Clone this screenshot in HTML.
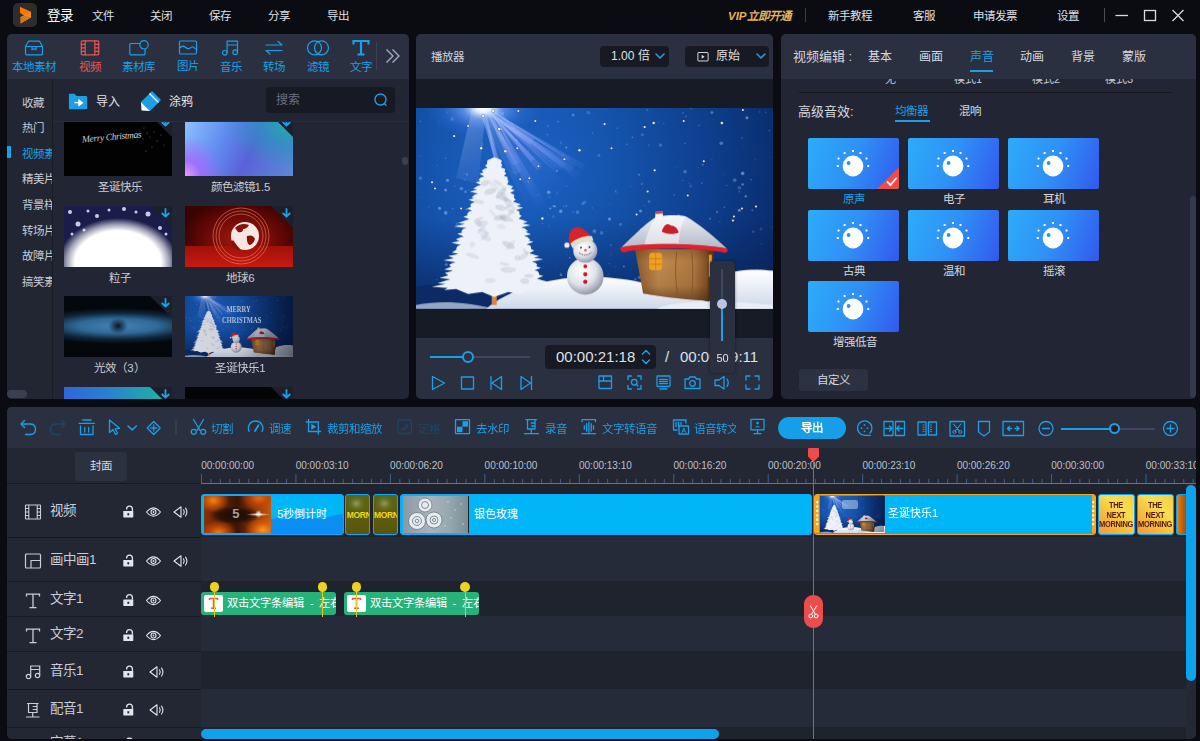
<!DOCTYPE html>
<html lang="zh-CN">
<head>
<meta charset="utf-8">
<title>视频编辑器</title>
<style>
*{box-sizing:border-box;margin:0;padding:0}
html,body{width:1200px;height:741px;overflow:hidden;background:#0b0c11}
body{font-family:"Liberation Sans",sans-serif;font-size:12px;color:#d5d8df;position:relative}
.abs,.abs>*{position:absolute}
#app{position:absolute;left:0;top:0;width:1200px;height:741px;overflow:hidden}
#app div,#app span,#app svg{position:absolute}
.t{white-space:nowrap;line-height:16px}
.blue{color:#1a9fe8}
svg{overflow:visible}
/* panels */
#left{left:7px;top:34px;width:402px;height:365px;background:#222634;border-radius:5px;overflow:hidden}
#player{left:416px;top:34px;width:357px;height:365px;background:#171b25;border-radius:5px;overflow:hidden}
#right{left:781px;top:34px;width:415px;height:365px;background:#222634;border-radius:5px;overflow:hidden}
#tl{left:7px;top:407px;width:1189px;height:332px;background:#242936;border-radius:5px;overflow:hidden}
.hd{left:0;top:0;width:100%;height:45px;background:#2a3040}
</style>
</head>
<body>
<div id="app">
<svg width="0" height="0" style="left:0;top:0">
<defs>
<radialGradient id="xbg" gradientUnits="userSpaceOnUse" cx="105" cy="55" r="300"><stop offset="0" stop-color="#1c62c4"/><stop offset="0.3" stop-color="#1555ae"/><stop offset="0.62" stop-color="#0e3f8e"/><stop offset="1" stop-color="#08245c"/></radialGradient>
<linearGradient id="xdk" x1="0" y1="0" x2="0" y2="1"><stop offset="0" stop-color="#061a48" stop-opacity="0"/><stop offset="0.55" stop-color="#061a48" stop-opacity="0"/><stop offset="1" stop-color="#061a48" stop-opacity="0.55"/></linearGradient>
<radialGradient id="xglow" cx="0.5" cy="0.5" r="0.5"><stop offset="0" stop-color="#ffffff"/><stop offset="0.12" stop-color="#e6f0ff" stop-opacity="0.98"/><stop offset="0.35" stop-color="#7eaaff" stop-opacity="0.6"/><stop offset="0.7" stop-color="#4a80f0" stop-opacity="0.2"/><stop offset="1" stop-color="#2a78e0" stop-opacity="0"/></radialGradient>
<linearGradient id="xray" gradientUnits="userSpaceOnUse" x1="67" y1="0" x2="125" y2="100"><stop offset="0" stop-color="#e6eeff" stop-opacity="0.95"/><stop offset="0.4" stop-color="#94a6ff" stop-opacity="0.5"/><stop offset="1" stop-color="#5a90ff" stop-opacity="0"/></linearGradient>
<linearGradient id="xwall" x1="0" y1="0" x2="1" y2="0"><stop offset="0" stop-color="#8c5a2c"/><stop offset="0.3" stop-color="#c08a50"/><stop offset="0.75" stop-color="#b07840"/><stop offset="1" stop-color="#6a3c1a"/></linearGradient>
<linearGradient id="xwsh" x1="0" y1="0" x2="0" y2="1"><stop offset="0" stop-color="#3a2008" stop-opacity="0.250"/><stop offset="0.250" stop-color="#3a2008" stop-opacity="0"/><stop offset="0.700" stop-color="#3a2008" stop-opacity="0.100"/><stop offset="1" stop-color="#3a2008" stop-opacity="0.550"/></linearGradient>
<linearGradient id="xsnow" x1="0" y1="0" x2="0" y2="1"><stop offset="0" stop-color="#ffffff"/><stop offset="1" stop-color="#cfd8ea"/></linearGradient>
<linearGradient id="xroof" x1="0" y1="0" x2="0" y2="1"><stop offset="0" stop-color="#eceef3"/><stop offset="1" stop-color="#b4b9c8"/></linearGradient>
<radialGradient id="xball" cx="0.4" cy="0.35" r="0.7"><stop offset="0" stop-color="#ffffff"/><stop offset="0.55" stop-color="#dfe3ea"/><stop offset="1" stop-color="#868e9f"/></radialGradient>
<filter id="b1"><feGaussianBlur stdDeviation="0.7"/></filter>
<filter id="b2"><feGaussianBlur stdDeviation="1.6"/></filter>
<symbol id="xmas" viewBox="0 0 356 200" preserveAspectRatio="none">
<rect width="356" height="200" fill="url(#xbg)"/>
<rect width="356" height="200" fill="url(#xdk)"/>
<g filter="url(#b1)"><path d="M69.2 0 L137.5 62.7 L140.9 58.7 Z" fill="url(#xray)" opacity="0.75"/><path d="M65.1 0 L113.9 36.5 L118.3 29.8 Z" fill="url(#xray)" opacity="0.59"/><path d="M67.7 0 L85.5 86.5 L93.2 84.5 Z" fill="url(#xray)" opacity="0.76"/><path d="M68.3 0 L144.2 62.2 L149.2 55.7 Z" fill="url(#xray)" opacity="0.80"/><path d="M69.1 0 L96.9 57.6 L103.5 53.9 Z" fill="url(#xray)" opacity="0.62"/><path d="M70.6 0 L164.6 60.9 L167.7 55.9 Z" fill="url(#xray)" opacity="0.85"/><path d="M71.6 0 L121.8 103.8 L126.6 101.3 Z" fill="url(#xray)" opacity="0.68"/><path d="M63.6 0 L94.8 108.4 L98.2 107.3 Z" fill="url(#xray)" opacity="0.59"/><path d="M65.6 0 L85.5 83.9 L92.0 82.1 Z" fill="url(#xray)" opacity="0.70"/><path d="M69.0 0 L121.1 62.2 L125.9 57.8 Z" fill="url(#xray)" opacity="0.86"/><path d="M73.9 0 L125.8 103.5 L132.9 99.6 Z" fill="url(#xray)" opacity="0.77"/><path d="M72.9 0 L158.7 71.5 L164.1 64.5 Z" fill="url(#xray)" opacity="0.73"/><path d="M68.9 0 L98.5 66.5 L105.6 62.8 Z" fill="url(#xray)" opacity="0.61"/><path d="M63.1 0 L154.0 64.2 L158.9 56.7 Z" fill="url(#xray)" opacity="0.82"/><path d="M71.2 0 L114.8 53.6 L118.4 50.4 Z" fill="url(#xray)" opacity="0.85"/><path d="M70.6 0 L151.9 52.8 L153.6 50.0 Z" fill="url(#xray)" opacity="0.63"/><path d="M56 0 L70 0 L62 75 L40 70 Z" fill="url(#xray)" opacity="0.3"/><path d="M60 0 L80 0 L190 118 L125 128 Z" fill="url(#xray)" opacity="0.35"/></g>
<ellipse cx="67" cy="1" rx="58" ry="30" fill="url(#xglow)"/>
<g filter="url(#b1)"><circle cx="161.0" cy="103.6" r="1.8" fill="#bcd6ff" opacity="0.31"/><circle cx="304.4" cy="35.1" r="1.8" fill="#bcd6ff" opacity="0.37"/><circle cx="282.3" cy="17.4" r="1.0" fill="#bcd6ff" opacity="0.20"/><circle cx="191.8" cy="164.7" r="0.5" fill="#bcd6ff" opacity="0.36"/><circle cx="141.0" cy="83.8" r="0.7" fill="#bcd6ff" opacity="0.37"/><circle cx="296.1" cy="11.7" r="0.5" fill="#bcd6ff" opacity="0.22"/><circle cx="86.1" cy="5.6" r="1.8" fill="#bcd6ff" opacity="0.26"/><circle cx="210.4" cy="36.1" r="0.8" fill="#bcd6ff" opacity="0.37"/><circle cx="177.9" cy="122.6" r="1.8" fill="#bcd6ff" opacity="0.38"/><circle cx="144.8" cy="102.0" r="0.6" fill="#bcd6ff" opacity="0.40"/><circle cx="112.2" cy="42.5" r="1.0" fill="#bcd6ff" opacity="0.16"/><circle cx="200.5" cy="20.0" r="0.6" fill="#bcd6ff" opacity="0.45"/><circle cx="137.6" cy="177.2" r="0.5" fill="#bcd6ff" opacity="0.22"/><circle cx="330.0" cy="9.7" r="1.5" fill="#bcd6ff" opacity="0.49"/><circle cx="141.5" cy="13.5" r="0.8" fill="#bcd6ff" opacity="0.42"/><circle cx="96.0" cy="16.1" r="1.2" fill="#bcd6ff" opacity="0.16"/><circle cx="146.0" cy="170.7" r="0.7" fill="#bcd6ff" opacity="0.24"/><circle cx="36.0" cy="11.1" r="1.8" fill="#bcd6ff" opacity="0.21"/><circle cx="199.1" cy="82.8" r="0.8" fill="#bcd6ff" opacity="0.49"/><circle cx="273.9" cy="77.6" r="1.5" fill="#bcd6ff" opacity="0.19"/><circle cx="149.8" cy="39.4" r="1.0" fill="#bcd6ff" opacity="0.45"/><circle cx="347.0" cy="109.7" r="0.5" fill="#bcd6ff" opacity="0.22"/><circle cx="140.4" cy="158.1" r="0.6" fill="#bcd6ff" opacity="0.16"/><circle cx="52.1" cy="81.7" r="0.5" fill="#bcd6ff" opacity="0.42"/><circle cx="117.1" cy="54.8" r="0.6" fill="#bcd6ff" opacity="0.18"/><circle cx="74.3" cy="117.8" r="0.5" fill="#bcd6ff" opacity="0.36"/><circle cx="132.3" cy="83.8" r="1.8" fill="#bcd6ff" opacity="0.44"/><circle cx="48.3" cy="71.4" r="0.7" fill="#bcd6ff" opacity="0.26"/><circle cx="81.3" cy="112.9" r="0.8" fill="#bcd6ff" opacity="0.21"/><circle cx="223.9" cy="102.5" r="1.5" fill="#bcd6ff" opacity="0.46"/><circle cx="214.9" cy="78.0" r="0.6" fill="#bcd6ff" opacity="0.19"/><circle cx="182.4" cy="47.2" r="1.5" fill="#bcd6ff" opacity="0.24"/><circle cx="293.2" cy="110.3" r="1.0" fill="#bcd6ff" opacity="0.33"/><circle cx="330.8" cy="180.8" r="0.7" fill="#bcd6ff" opacity="0.23"/><circle cx="199.1" cy="157.7" r="0.6" fill="#bcd6ff" opacity="0.25"/><circle cx="326.6" cy="37.7" r="0.5" fill="#bcd6ff" opacity="0.17"/><circle cx="146.5" cy="46.1" r="0.5" fill="#bcd6ff" opacity="0.21"/><circle cx="131.3" cy="105.9" r="0.7" fill="#bcd6ff" opacity="0.18"/><circle cx="49.3" cy="83.3" r="1.2" fill="#bcd6ff" opacity="0.38"/><circle cx="246.1" cy="108.1" r="0.7" fill="#bcd6ff" opacity="0.36"/><circle cx="328.8" cy="87.8" r="1.2" fill="#bcd6ff" opacity="0.40"/><circle cx="342.7" cy="3.9" r="0.6" fill="#bcd6ff" opacity="0.32"/><circle cx="260.1" cy="59.0" r="0.6" fill="#bcd6ff" opacity="0.18"/><circle cx="194.4" cy="136.3" r="0.7" fill="#bcd6ff" opacity="0.43"/><circle cx="325.7" cy="65.1" r="1.8" fill="#bcd6ff" opacity="0.47"/><circle cx="310.1" cy="77.2" r="0.5" fill="#bcd6ff" opacity="0.45"/><circle cx="203.9" cy="115.6" r="1.5" fill="#bcd6ff" opacity="0.28"/><circle cx="4.4" cy="13.4" r="0.6" fill="#bcd6ff" opacity="0.37"/><circle cx="353.6" cy="162.8" r="1.2" fill="#bcd6ff" opacity="0.29"/><circle cx="261.7" cy="107.5" r="1.8" fill="#bcd6ff" opacity="0.31"/><circle cx="192.7" cy="96.0" r="0.5" fill="#bcd6ff" opacity="0.26"/><circle cx="31.2" cy="4.1" r="0.6" fill="#bcd6ff" opacity="0.32"/><circle cx="218.8" cy="170.3" r="1.0" fill="#bcd6ff" opacity="0.46"/><circle cx="131.0" cy="26.5" r="0.8" fill="#bcd6ff" opacity="0.33"/><circle cx="268.3" cy="63.4" r="1.8" fill="#bcd6ff" opacity="0.32"/><circle cx="86.0" cy="74.9" r="1.0" fill="#bcd6ff" opacity="0.22"/><circle cx="153.4" cy="149.1" r="0.8" fill="#bcd6ff" opacity="0.46"/><circle cx="136.9" cy="107.9" r="1.2" fill="#bcd6ff" opacity="0.22"/><circle cx="47.9" cy="64.9" r="0.5" fill="#bcd6ff" opacity="0.40"/><circle cx="338.2" cy="51.2" r="0.7" fill="#bcd6ff" opacity="0.19"/><circle cx="167.8" cy="171.3" r="1.5" fill="#bcd6ff" opacity="0.28"/><circle cx="185.1" cy="124.3" r="1.8" fill="#bcd6ff" opacity="0.26"/><circle cx="295.0" cy="51.5" r="0.5" fill="#bcd6ff" opacity="0.39"/><circle cx="100.1" cy="65.5" r="0.5" fill="#bcd6ff" opacity="0.37"/><circle cx="144.2" cy="35.1" r="1.0" fill="#bcd6ff" opacity="0.23"/><circle cx="50.2" cy="8.7" r="0.6" fill="#bcd6ff" opacity="0.31"/><circle cx="224.3" cy="121.2" r="1.2" fill="#bcd6ff" opacity="0.49"/><circle cx="243.7" cy="36.9" r="1.8" fill="#bcd6ff" opacity="0.24"/><circle cx="254.3" cy="139.7" r="0.5" fill="#bcd6ff" opacity="0.21"/><circle cx="97.0" cy="64.0" r="0.7" fill="#bcd6ff" opacity="0.29"/><circle cx="281.9" cy="167.7" r="0.6" fill="#bcd6ff" opacity="0.29"/><circle cx="317.8" cy="71.8" r="1.8" fill="#bcd6ff" opacity="0.31"/><circle cx="222.7" cy="168.3" r="1.5" fill="#bcd6ff" opacity="0.34"/><circle cx="232.4" cy="93.0" r="1.2" fill="#bcd6ff" opacity="0.31"/><circle cx="231.9" cy="37.9" r="0.6" fill="#bcd6ff" opacity="0.22"/><circle cx="320.4" cy="181.4" r="1.0" fill="#bcd6ff" opacity="0.34"/><circle cx="281.5" cy="59.3" r="0.5" fill="#bcd6ff" opacity="0.27"/><circle cx="29.5" cy="81.6" r="1.5" fill="#bcd6ff" opacity="0.42"/><circle cx="173.5" cy="5.3" r="0.6" fill="#bcd6ff" opacity="0.30"/><circle cx="12.5" cy="98.6" r="0.7" fill="#bcd6ff" opacity="0.31"/><circle cx="355.9" cy="166.6" r="1.8" fill="#bcd6ff" opacity="0.48"/><circle cx="175.4" cy="175.6" r="0.6" fill="#bcd6ff" opacity="0.42"/><circle cx="156.4" cy="103.4" r="0.7" fill="#bcd6ff" opacity="0.33"/><circle cx="300.3" cy="103.6" r="1.0" fill="#bcd6ff" opacity="0.38"/><circle cx="339.9" cy="161.0" r="0.8" fill="#bcd6ff" opacity="0.26"/><circle cx="50.2" cy="100.8" r="1.0" fill="#bcd6ff" opacity="0.35"/><circle cx="71.5" cy="99.1" r="0.5" fill="#bcd6ff" opacity="0.36"/><circle cx="9.9" cy="179.3" r="1.5" fill="#bcd6ff" opacity="0.34"/><circle cx="352.2" cy="22.6" r="0.6" fill="#bcd6ff" opacity="0.39"/><circle cx="23.5" cy="99.7" r="1.5" fill="#bcd6ff" opacity="0.47"/><circle cx="284.9" cy="74.8" r="0.8" fill="#bcd6ff" opacity="0.32"/><circle cx="45.2" cy="80.2" r="1.8" fill="#bcd6ff" opacity="0.33"/><circle cx="38.7" cy="77.6" r="0.5" fill="#bcd6ff" opacity="0.47"/><circle cx="46.1" cy="144.2" r="0.5" fill="#bcd6ff" opacity="0.16"/><circle cx="55.4" cy="2.2" r="1.0" fill="#bcd6ff" opacity="0.26"/><circle cx="126.5" cy="114.7" r="0.6" fill="#bcd6ff" opacity="0.32"/><circle cx="207.3" cy="157.6" r="1.0" fill="#bcd6ff" opacity="0.40"/><circle cx="249.7" cy="162.6" r="0.5" fill="#bcd6ff" opacity="0.28"/><circle cx="147.2" cy="97.9" r="0.7" fill="#bcd6ff" opacity="0.34"/><circle cx="307.5" cy="98.8" r="0.8" fill="#bcd6ff" opacity="0.34"/><circle cx="303.0" cy="113.2" r="0.7" fill="#bcd6ff" opacity="0.23"/><circle cx="263.7" cy="149.9" r="0.7" fill="#bcd6ff" opacity="0.26"/><circle cx="112.1" cy="170.7" r="0.8" fill="#bcd6ff" opacity="0.42"/><circle cx="69.3" cy="17.9" r="0.8" fill="#bcd6ff" opacity="0.20"/><circle cx="31.4" cy="71.8" r="1.5" fill="#bcd6ff" opacity="0.44"/><circle cx="150.1" cy="146.1" r="0.7" fill="#bcd6ff" opacity="0.22"/><circle cx="223.6" cy="147.8" r="0.6" fill="#bcd6ff" opacity="0.22"/><circle cx="242.9" cy="168.6" r="1.2" fill="#bcd6ff" opacity="0.19"/><circle cx="180.0" cy="140.3" r="0.8" fill="#bcd6ff" opacity="0.43"/><circle cx="171.6" cy="4.5" r="1.8" fill="#bcd6ff" opacity="0.20"/><circle cx="65.7" cy="37.7" r="0.7" fill="#bcd6ff" opacity="0.50"/><circle cx="330.0" cy="17.6" r="0.5" fill="#bcd6ff" opacity="0.20"/><circle cx="242.4" cy="14.4" r="0.6" fill="#bcd6ff" opacity="0.26"/><circle cx="166.2" cy="95.3" r="1.5" fill="#bcd6ff" opacity="0.22"/><circle cx="132.8" cy="117.3" r="0.5" fill="#bcd6ff" opacity="0.45"/><circle cx="64.5" cy="84.0" r="1.2" fill="#bcd6ff" opacity="0.29"/><circle cx="69.5" cy="30.5" r="0.5" fill="#bcd6ff" opacity="0.26"/><circle cx="30.2" cy="155.8" r="1.5" fill="#bcd6ff" opacity="0.35"/><circle cx="68.0" cy="108.2" r="1.2" fill="#bcd6ff" opacity="0.43"/><circle cx="91.9" cy="168.6" r="0.7" fill="#bcd6ff" opacity="0.44"/><circle cx="144.4" cy="165.9" r="1.2" fill="#bcd6ff" opacity="0.42"/><circle cx="272.4" cy="75.1" r="0.7" fill="#bcd6ff" opacity="0.17"/><circle cx="121.7" cy="86.7" r="0.5" fill="#bcd6ff" opacity="0.46"/><circle cx="352.6" cy="167.0" r="0.5" fill="#bcd6ff" opacity="0.23"/><circle cx="336.3" cy="123.2" r="1.2" fill="#bcd6ff" opacity="0.23"/><circle cx="144.6" cy="33.7" r="0.6" fill="#bcd6ff" opacity="0.29"/><circle cx="356.0" cy="118.8" r="0.6" fill="#bcd6ff" opacity="0.42"/><circle cx="348.9" cy="4.2" r="0.6" fill="#bcd6ff" opacity="0.41"/><circle cx="91.4" cy="74.3" r="0.5" fill="#bcd6ff" opacity="0.42"/><circle cx="230.7" cy="2.0" r="1.0" fill="#bcd6ff" opacity="0.24"/><circle cx="322.4" cy="101.8" r="1.5" fill="#bcd6ff" opacity="0.49"/><circle cx="202.2" cy="184.1" r="1.8" fill="#bcd6ff" opacity="0.43"/><circle cx="27.1" cy="110.5" r="0.5" fill="#bcd6ff" opacity="0.29"/><circle cx="334.1" cy="71.4" r="0.7" fill="#bcd6ff" opacity="0.45"/><circle cx="192.9" cy="110.4" r="1.5" fill="#bcd6ff" opacity="0.48"/><circle cx="149.8" cy="97.5" r="1.0" fill="#bcd6ff" opacity="0.28"/><circle cx="101.7" cy="121.2" r="1.0" fill="#bcd6ff" opacity="0.38"/><circle cx="266.2" cy="5.0" r="0.8" fill="#bcd6ff" opacity="0.36"/><circle cx="225.3" cy="75.6" r="1.5" fill="#bcd6ff" opacity="0.17"/><circle cx="112.2" cy="73.6" r="1.2" fill="#bcd6ff" opacity="0.18"/><circle cx="322.4" cy="79.5" r="1.8" fill="#bcd6ff" opacity="0.24"/><circle cx="269.0" cy="8.4" r="0.6" fill="#bcd6ff" opacity="0.48"/><circle cx="257.3" cy="86.6" r="0.8" fill="#bcd6ff" opacity="0.36"/><circle cx="41.0" cy="115.5" r="1.8" fill="#bcd6ff" opacity="0.19"/><circle cx="306.6" cy="66.0" r="0.7" fill="#bcd6ff" opacity="0.19"/><circle cx="157.7" cy="123.6" r="1.8" fill="#bcd6ff" opacity="0.36"/><circle cx="227.7" cy="126.2" r="1.2" fill="#bcd6ff" opacity="0.42"/><circle cx="189.0" cy="184.6" r="1.0" fill="#bcd6ff" opacity="0.41"/><circle cx="84.9" cy="21.1" r="1.0" fill="#bcd6ff" opacity="0.42"/><circle cx="222.5" cy="66.4" r="1.0" fill="#bcd6ff" opacity="0.36"/><circle cx="258.1" cy="129.3" r="0.8" fill="#bcd6ff" opacity="0.37"/><circle cx="268.2" cy="35.1" r="0.8" fill="#bcd6ff" opacity="0.33"/><circle cx="232.4" cy="36.3" r="0.5" fill="#bcd6ff" opacity="0.37"/><circle cx="3.4" cy="48.0" r="0.5" fill="#bcd6ff" opacity="0.37"/><circle cx="36.5" cy="100.2" r="0.6" fill="#bcd6ff" opacity="0.41"/><circle cx="325.0" cy="29.8" r="0.8" fill="#bcd6ff" opacity="0.37"/><circle cx="132.9" cy="88.5" r="0.8" fill="#bcd6ff" opacity="0.27"/><circle cx="176.0" cy="24.7" r="0.6" fill="#bcd6ff" opacity="0.43"/><circle cx="159.2" cy="152.1" r="0.8" fill="#bcd6ff" opacity="0.31"/><circle cx="266.0" cy="72.2" r="0.7" fill="#bcd6ff" opacity="0.28"/><circle cx="232.7" cy="183.0" r="1.2" fill="#bcd6ff" opacity="0.25"/><circle cx="270.2" cy="152.8" r="0.7" fill="#bcd6ff" opacity="0.30"/><circle cx="131.5" cy="17.9" r="1.2" fill="#bcd6ff" opacity="0.18"/><circle cx="29.6" cy="104.4" r="1.8" fill="#bcd6ff" opacity="0.44"/><circle cx="165.0" cy="152.3" r="0.5" fill="#bcd6ff" opacity="0.18"/><circle cx="75.9" cy="122.5" r="0.6" fill="#bcd6ff" opacity="0.39"/><circle cx="176.1" cy="141.4" r="1.2" fill="#bcd6ff" opacity="0.25"/><circle cx="50.9" cy="66.2" r="1.2" fill="#bcd6ff" opacity="0.28"/><circle cx="41.8" cy="131.2" r="1.0" fill="#bcd6ff" opacity="0.30"/><circle cx="285.9" cy="56.4" r="1.2" fill="#bcd6ff" opacity="0.23"/><circle cx="344.5" cy="135.0" r="0.8" fill="#bcd6ff" opacity="0.18"/><circle cx="295.0" cy="4.5" r="1.5" fill="#bcd6ff" opacity="0.35"/><circle cx="283.4" cy="136.7" r="1.2" fill="#bcd6ff" opacity="0.43"/><circle cx="192.4" cy="154.7" r="0.7" fill="#bcd6ff" opacity="0.21"/><circle cx="270.2" cy="163.0" r="1.0" fill="#bcd6ff" opacity="0.43"/><circle cx="78.8" cy="10.7" r="0.7" fill="#bcd6ff" opacity="0.35"/><circle cx="344.0" cy="120.5" r="1.5" fill="#bcd6ff" opacity="0.17"/><circle cx="194.7" cy="145.8" r="0.6" fill="#bcd6ff" opacity="0.27"/><circle cx="97.4" cy="19.5" r="1.2" fill="#bcd6ff" opacity="0.18"/><circle cx="225.7" cy="26.6" r="1.5" fill="#bcd6ff" opacity="0.24"/><circle cx="78.5" cy="141.6" r="1.2" fill="#bcd6ff" opacity="0.42"/><circle cx="140.4" cy="62.5" r="1.2" fill="#bcd6ff" opacity="0.39"/><circle cx="175.7" cy="99.4" r="0.6" fill="#bcd6ff" opacity="0.40"/><circle cx="325.7" cy="76.0" r="1.2" fill="#bcd6ff" opacity="0.45"/><circle cx="286.9" cy="154.3" r="1.8" fill="#bcd6ff" opacity="0.49"/><circle cx="227.9" cy="96.9" r="0.5" fill="#bcd6ff" opacity="0.43"/><circle cx="150.1" cy="77.8" r="0.7" fill="#bcd6ff" opacity="0.24"/><circle cx="57.8" cy="117.5" r="0.7" fill="#bcd6ff" opacity="0.26"/><circle cx="138.6" cy="97.9" r="1.0" fill="#bcd6ff" opacity="0.49"/><circle cx="21.1" cy="57.1" r="0.6" fill="#bcd6ff" opacity="0.26"/><circle cx="55.4" cy="170.2" r="0.5" fill="#bcd6ff" opacity="0.41"/><circle cx="6.1" cy="89.0" r="0.5" fill="#bcd6ff" opacity="0.26"/><circle cx="70.4" cy="66.5" r="0.8" fill="#bcd6ff" opacity="0.36"/><circle cx="168.0" cy="94.1" r="1.8" fill="#bcd6ff" opacity="0.21"/><circle cx="100.1" cy="31.9" r="1.0" fill="#bcd6ff" opacity="0.37"/><circle cx="335.4" cy="101.8" r="1.0" fill="#bcd6ff" opacity="0.32"/><circle cx="143.3" cy="176.8" r="0.6" fill="#bcd6ff" opacity="0.32"/><circle cx="78.7" cy="9.2" r="0.7" fill="#bcd6ff" opacity="0.43"/><circle cx="137.1" cy="97.6" r="1.0" fill="#bcd6ff" opacity="0.43"/><circle cx="20.6" cy="171.0" r="0.5" fill="#bcd6ff" opacity="0.46"/><circle cx="322.3" cy="83.3" r="0.8" fill="#bcd6ff" opacity="0.40"/><circle cx="215.8" cy="29.1" r="0.7" fill="#bcd6ff" opacity="0.42"/><circle cx="51.5" cy="168.0" r="0.7" fill="#bcd6ff" opacity="0.37"/><circle cx="353.6" cy="49.3" r="0.5" fill="#bcd6ff" opacity="0.20"/><circle cx="274.3" cy="0.3" r="0.7" fill="#bcd6ff" opacity="0.44"/><circle cx="29.3" cy="49.9" r="0.6" fill="#bcd6ff" opacity="0.46"/><circle cx="247.0" cy="15.3" r="1.0" fill="#bcd6ff" opacity="0.16"/><circle cx="66.8" cy="35.7" r="0.6" fill="#bcd6ff" opacity="0.42"/><circle cx="156.7" cy="6.9" r="1.5" fill="#bcd6ff" opacity="0.33"/><circle cx="56.1" cy="153.9" r="1.0" fill="#bcd6ff" opacity="0.26"/><circle cx="144.3" cy="102.9" r="1.8" fill="#bcd6ff" opacity="0.38"/><circle cx="23.9" cy="13.8" r="0.7" fill="#bcd6ff" opacity="0.19"/><circle cx="140.3" cy="85.4" r="0.6" fill="#bcd6ff" opacity="0.38"/><circle cx="4.4" cy="69.8" r="1.8" fill="#bcd6ff" opacity="0.23"/><circle cx="200.8" cy="84.7" r="0.5" fill="#bcd6ff" opacity="0.45"/><circle cx="300.6" cy="133.1" r="0.7" fill="#bcd6ff" opacity="0.25"/><circle cx="133.9" cy="99.9" r="1.0" fill="#bcd6ff" opacity="0.48"/><circle cx="268.8" cy="102.8" r="0.6" fill="#bcd6ff" opacity="0.24"/><circle cx="71.2" cy="135.3" r="1.2" fill="#bcd6ff" opacity="0.26"/><circle cx="97.5" cy="86.9" r="1.2" fill="#bcd6ff" opacity="0.31"/></g>
<circle cx="77" cy="3" r="1.8" fill="#3a3a50" opacity="0.55"/><circle cx="77" cy="3" r="1.3" fill="#f6f0dc"/><circle cx="67" cy="8" r="1.7" fill="#3a3a50" opacity="0.55"/><circle cx="67" cy="8" r="1.2" fill="#f6f0dc"/><circle cx="52" cy="18" r="1.5" fill="#3a3a50" opacity="0.55"/><circle cx="52" cy="18" r="1.0" fill="#f6f0dc"/><circle cx="38" cy="28" r="1.6" fill="#3a3a50" opacity="0.55"/><circle cx="38" cy="28" r="1.1" fill="#f6f0dc"/><circle cx="83" cy="21" r="1.8" fill="#3a3a50" opacity="0.55"/><circle cx="83" cy="21" r="1.3" fill="#f6f0dc"/><circle cx="102" cy="3" r="1.5" fill="#3a3a50" opacity="0.55"/><circle cx="102" cy="3" r="1.0" fill="#f6f0dc"/><circle cx="119" cy="13" r="1.5" fill="#3a3a50" opacity="0.55"/><circle cx="119" cy="13" r="1.0" fill="#f6f0dc"/><circle cx="65" cy="40" r="1.7" fill="#3a3a50" opacity="0.55"/><circle cx="65" cy="40" r="1.2" fill="#f6f0dc"/><circle cx="89" cy="43" r="1.8" fill="#3a3a50" opacity="0.55"/><circle cx="89" cy="43" r="1.3" fill="#f6f0dc"/><circle cx="101" cy="40" r="1.5" fill="#3a3a50" opacity="0.55"/><circle cx="101" cy="40" r="1.0" fill="#f6f0dc"/><circle cx="188" cy="16" r="1.6" fill="#3a3a50" opacity="0.55"/><circle cx="188" cy="16" r="1.1" fill="#f6f0dc"/><circle cx="228" cy="19" r="1.6" fill="#3a3a50" opacity="0.55"/><circle cx="228" cy="19" r="1.1" fill="#f6f0dc"/><circle cx="237" cy="15" r="1.7" fill="#3a3a50" opacity="0.55"/><circle cx="237" cy="15" r="1.2" fill="#f6f0dc"/><circle cx="267" cy="13" r="1.5" fill="#3a3a50" opacity="0.55"/><circle cx="267" cy="13" r="1.0" fill="#f6f0dc"/><circle cx="305" cy="15" r="1.7" fill="#3a3a50" opacity="0.55"/><circle cx="305" cy="15" r="1.2" fill="#f6f0dc"/><circle cx="326" cy="2" r="1.5" fill="#3a3a50" opacity="0.55"/><circle cx="326" cy="2" r="1.0" fill="#f6f0dc"/><circle cx="163" cy="42" r="1.7" fill="#3a3a50" opacity="0.55"/><circle cx="163" cy="42" r="1.2" fill="#f6f0dc"/><circle cx="195" cy="40" r="1.5" fill="#3a3a50" opacity="0.55"/><circle cx="195" cy="40" r="1.0" fill="#f6f0dc"/><circle cx="148" cy="51" r="1.6" fill="#3a3a50" opacity="0.55"/><circle cx="148" cy="51" r="1.1" fill="#f6f0dc"/><circle cx="122" cy="58" r="1.5" fill="#3a3a50" opacity="0.55"/><circle cx="122" cy="58" r="1.0" fill="#f6f0dc"/><circle cx="104" cy="71" r="1.5" fill="#3a3a50" opacity="0.55"/><circle cx="104" cy="71" r="1.0" fill="#f6f0dc"/><circle cx="113" cy="70" r="1.5" fill="#3a3a50" opacity="0.55"/><circle cx="113" cy="70" r="1.0" fill="#f6f0dc"/><circle cx="16" cy="74" r="1.5" fill="#3a3a50" opacity="0.55"/><circle cx="16" cy="74" r="1.0" fill="#f6f0dc"/><circle cx="19" cy="80" r="1.5" fill="#3a3a50" opacity="0.55"/><circle cx="19" cy="80" r="1.0" fill="#f6f0dc"/><circle cx="287" cy="53" r="1.5" fill="#3a3a50" opacity="0.55"/><circle cx="287" cy="53" r="1.0" fill="#f6f0dc"/><circle cx="238" cy="62" r="1.6" fill="#3a3a50" opacity="0.55"/><circle cx="238" cy="62" r="1.1" fill="#f6f0dc"/><circle cx="231" cy="83" r="1.5" fill="#3a3a50" opacity="0.55"/><circle cx="231" cy="83" r="1.0" fill="#f6f0dc"/><circle cx="271" cy="87" r="1.5" fill="#3a3a50" opacity="0.55"/><circle cx="271" cy="87" r="1.0" fill="#f6f0dc"/><circle cx="220" cy="106" r="1.5" fill="#3a3a50" opacity="0.55"/><circle cx="220" cy="106" r="1.0" fill="#f6f0dc"/><circle cx="325" cy="100" r="1.5" fill="#3a3a50" opacity="0.55"/><circle cx="325" cy="100" r="1.0" fill="#f6f0dc"/><circle cx="339" cy="98" r="1.5" fill="#3a3a50" opacity="0.55"/><circle cx="339" cy="98" r="1.0" fill="#f6f0dc"/><circle cx="317" cy="108" r="1.5" fill="#3a3a50" opacity="0.55"/><circle cx="317" cy="108" r="1.0" fill="#f6f0dc"/><circle cx="316" cy="112" r="1.5" fill="#3a3a50" opacity="0.55"/><circle cx="316" cy="112" r="1.0" fill="#f6f0dc"/><circle cx="126" cy="110" r="1.7" fill="#3a3a50" opacity="0.55"/><circle cx="126" cy="110" r="1.2" fill="#f6f0dc"/><circle cx="100" cy="103" r="1.5" fill="#3a3a50" opacity="0.55"/><circle cx="100" cy="103" r="1.0" fill="#f6f0dc"/><circle cx="45" cy="100" r="1.5" fill="#3a3a50" opacity="0.55"/><circle cx="45" cy="100" r="1.0" fill="#f6f0dc"/><circle cx="57" cy="126" r="1.5" fill="#3a3a50" opacity="0.55"/><circle cx="57" cy="126" r="1.0" fill="#f6f0dc"/><circle cx="150" cy="180" r="1.7" fill="#3a3a50" opacity="0.55"/><circle cx="150" cy="180" r="1.2" fill="#f6f0dc"/><circle cx="262" cy="179" r="1.5" fill="#3a3a50" opacity="0.55"/><circle cx="262" cy="179" r="1.0" fill="#f6f0dc"/><circle cx="156" cy="170" r="1.5" fill="#3a3a50" opacity="0.55"/><circle cx="156" cy="170" r="1.0" fill="#f6f0dc"/><circle cx="202" cy="190" r="1.7" fill="#3a3a50" opacity="0.55"/><circle cx="202" cy="190" r="1.2" fill="#f6f0dc"/><circle cx="207" cy="198" r="1.7" fill="#3a3a50" opacity="0.55"/><circle cx="207" cy="198" r="1.2" fill="#f6f0dc"/>
<path d="M0 178 C30 172 60 180 90 188 L90 200 L0 200 Z" fill="#0b2a66"/>
<path d="M0 196 C25 191 50 193 80 200 L0 200 Z" fill="#93a6c6"/>
<path d="M300 168 C320 160 340 160 356 162 L356 200 L290 200 Z" fill="url(#xsnow)"/>
<path d="M70 200 C90 182 130 169 170 168 C210 168 240 176 262 186 C290 190 300 196 300 200 Z" fill="url(#xsnow)"/>
<path d="M240 200 C255 192 300 190 356 196 L356 200 Z" fill="#e8edf6"/>
<rect x="75.500" y="184" width="5" height="12" fill="#d98442"/>
<polygon points="78.0,49.0 71.3,52.0 70.8,54.3 71.1,55.5 68.8,57.5 71.4,59.5 67.8,60.6 65.5,62.6 67.6,64.1 63.1,65.5 68.1,68.1 64.6,69.1 62.2,71.7 64.3,72.6 59.6,74.1 64.9,76.6 61.4,77.6 56.9,80.4 61.1,81.1 53.8,83.4 61.8,85.1 58.4,86.2 55.5,89.1 58.0,89.7 52.3,91.4 58.9,93.7 55.5,94.7 54.1,96.6 54.9,98.2 50.8,100.3 56.0,102.2 52.6,103.2 50.7,106.0 52.0,106.7 47.1,108.2 53.1,110.7 49.7,111.8 42.1,114.3 49.0,115.3 37.9,117.8 50.4,119.3 46.9,120.3 45.1,123.0 46.2,123.8 41.1,125.2 47.6,127.8 44.1,128.8 39.7,130.7 43.3,132.3 35.4,134.1 44.9,136.3 41.4,137.4 40.1,139.8 40.5,140.9 35.8,143.9 42.2,144.9 38.7,145.9 32.2,147.3 37.8,149.4 27.3,151.6 39.6,153.4 36.0,154.4 33.0,156.1 35.0,157.9 28.1,160.8 37.0,161.9 33.3,163.0 28.7,164.1 32.3,166.5 23.5,169.1 34.4,170.5 30.7,171.5 21.4,174.3 29.6,175.0 15.6,177.9 31.8,179.0 28.0,181.0 40.0,180.0 52.0,185.0 66.0,183.0 78.0,188.0 92.0,183.0 104.0,185.0 116.0,179.0 127.0,177.0 123.1,178.5 136.0,177.0 125.3,174.5 131.4,172.8 124.2,171.0 120.6,170.0 126.9,167.2 122.7,166.0 122.9,165.0 121.6,162.5 118.1,161.4 124.6,159.1 120.0,157.4 120.9,155.6 119.0,153.9 115.5,152.9 126.9,150.6 117.3,148.9 123.0,147.5 116.4,145.4 112.9,144.4 118.0,141.8 114.6,140.4 114.8,138.9 113.8,136.9 110.3,135.8 117.1,133.1 111.9,131.8 114.0,131.3 111.1,128.3 107.7,127.3 114.7,125.6 109.1,123.3 111.8,122.6 108.4,119.8 105.0,118.8 114.2,116.7 106.3,114.8 111.3,113.4 105.6,111.3 102.3,110.2 105.4,107.2 103.4,106.2 103.2,105.3 102.9,102.7 99.5,101.7 107.0,99.2 100.5,97.7 104.7,95.9 100.0,94.2 96.7,93.2 99.5,91.3 97.6,89.2 97.8,87.0 97.1,85.7 93.8,84.6 98.6,81.8 94.6,80.6 96.9,78.2 94.2,77.1 90.8,76.1 92.6,72.7 91.4,72.1 91.4,70.1 91.1,68.6 87.7,67.6 90.1,64.8 88.2,63.6 89.1,61.1 87.9,60.1 84.4,59.0 86.2,57.1 84.7,55.0 85.6,53.0 84.6,51.5" fill="#eef1f7"/>
<g filter="url(#b1)"><ellipse cx="92.3" cy="136.3" rx="7.0" ry="2.9" transform="rotate(24 92.3 136.3)" fill="#a8b2c6" opacity="0.36"/><ellipse cx="77.2" cy="76.9" rx="7.7" ry="2.4" transform="rotate(40 77.2 76.9)" fill="#a8b2c6" opacity="0.20"/><ellipse cx="65.5" cy="120.9" rx="5.7" ry="2.2" transform="rotate(-49 65.5 120.9)" fill="#a8b2c6" opacity="0.22"/><ellipse cx="93.6" cy="101.9" rx="6.8" ry="1.5" transform="rotate(30 93.6 101.9)" fill="#a8b2c6" opacity="0.21"/><ellipse cx="56.1" cy="135.7" rx="3.0" ry="2.8" transform="rotate(-29 56.1 135.7)" fill="#a8b2c6" opacity="0.22"/><ellipse cx="108.3" cy="172.2" rx="4.4" ry="2.9" transform="rotate(4 108.3 172.2)" fill="#a8b2c6" opacity="0.32"/><ellipse cx="92.5" cy="94.5" rx="6.5" ry="2.9" transform="rotate(39 92.5 94.5)" fill="#a8b2c6" opacity="0.24"/><ellipse cx="63.8" cy="110.1" rx="3.7" ry="1.3" transform="rotate(-20 63.8 110.1)" fill="#a8b2c6" opacity="0.30"/><ellipse cx="81.6" cy="74.3" rx="4.7" ry="1.8" transform="rotate(32 81.6 74.3)" fill="#a8b2c6" opacity="0.28"/><ellipse cx="77.3" cy="105.6" rx="6.5" ry="1.3" transform="rotate(48 77.3 105.6)" fill="#a8b2c6" opacity="0.18"/><ellipse cx="101.1" cy="149.0" rx="3.1" ry="2.6" transform="rotate(-13 101.1 149.0)" fill="#a8b2c6" opacity="0.30"/><ellipse cx="68.6" cy="74.9" rx="3.9" ry="2.9" transform="rotate(-30 68.6 74.9)" fill="#a8b2c6" opacity="0.33"/><ellipse cx="112.5" cy="167.0" rx="4.7" ry="1.8" transform="rotate(2 112.5 167.0)" fill="#a8b2c6" opacity="0.34"/><ellipse cx="84.7" cy="84.8" rx="7.0" ry="2.7" transform="rotate(-46 84.7 84.8)" fill="#a8b2c6" opacity="0.37"/><ellipse cx="73.9" cy="83.1" rx="6.1" ry="2.9" transform="rotate(-16 73.9 83.1)" fill="#a8b2c6" opacity="0.36"/><ellipse cx="67.9" cy="128.5" rx="4.6" ry="1.5" transform="rotate(-42 67.9 128.5)" fill="#a8b2c6" opacity="0.21"/><ellipse cx="109.3" cy="142.9" rx="3.8" ry="1.3" transform="rotate(49 109.3 142.9)" fill="#a8b2c6" opacity="0.29"/><ellipse cx="66.1" cy="114.6" rx="6.0" ry="2.7" transform="rotate(-4 66.1 114.6)" fill="#a8b2c6" opacity="0.26"/><ellipse cx="87.8" cy="79.6" rx="3.2" ry="2.1" transform="rotate(34 87.8 79.6)" fill="#a8b2c6" opacity="0.21"/><ellipse cx="107.6" cy="147.2" rx="6.2" ry="2.6" transform="rotate(-39 107.6 147.2)" fill="#a8b2c6" opacity="0.27"/><ellipse cx="88.1" cy="88.9" rx="4.5" ry="2.0" transform="rotate(50 88.1 88.9)" fill="#a8b2c6" opacity="0.35"/><ellipse cx="74.2" cy="171.6" rx="5.4" ry="2.5" transform="rotate(-2 74.2 171.6)" fill="#a8b2c6" opacity="0.24"/><ellipse cx="62.0" cy="114.4" rx="4.9" ry="3.0" transform="rotate(46 62.0 114.4)" fill="#a8b2c6" opacity="0.31"/><ellipse cx="69.7" cy="123.9" rx="3.4" ry="1.7" transform="rotate(28 69.7 123.9)" fill="#a8b2c6" opacity="0.35"/><ellipse cx="90.2" cy="110.1" rx="6.9" ry="2.5" transform="rotate(16 90.2 110.1)" fill="#a8b2c6" opacity="0.33"/><ellipse cx="86.7" cy="110.3" rx="4.4" ry="2.1" transform="rotate(27 86.7 110.3)" fill="#a8b2c6" opacity="0.32"/><ellipse cx="95.1" cy="103.4" rx="6.2" ry="2.2" transform="rotate(-49 95.1 103.4)" fill="#a8b2c6" opacity="0.29"/><ellipse cx="84.1" cy="99.1" rx="5.3" ry="2.7" transform="rotate(15 84.1 99.1)" fill="#a8b2c6" opacity="0.34"/><ellipse cx="84.0" cy="108.8" rx="6.7" ry="2.7" transform="rotate(-15 84.0 108.8)" fill="#a8b2c6" opacity="0.35"/><ellipse cx="92.0" cy="161.0" rx="7.9" ry="2.9" transform="rotate(2 92.0 161.0)" fill="#a8b2c6" opacity="0.29"/><ellipse cx="88.3" cy="90.6" rx="7.7" ry="2.1" transform="rotate(19 88.3 90.6)" fill="#a8b2c6" opacity="0.32"/><ellipse cx="56.4" cy="147.0" rx="6.9" ry="2.2" transform="rotate(17 56.4 147.0)" fill="#a8b2c6" opacity="0.26"/><ellipse cx="94.2" cy="136.4" rx="6.2" ry="2.5" transform="rotate(-47 94.2 136.4)" fill="#a8b2c6" opacity="0.21"/><ellipse cx="85.1" cy="118.1" rx="4.1" ry="2.4" transform="rotate(13 85.1 118.1)" fill="#a8b2c6" opacity="0.19"/><ellipse cx="64.4" cy="121.2" rx="3.3" ry="1.4" transform="rotate(-18 64.4 121.2)" fill="#a8b2c6" opacity="0.22"/><ellipse cx="63.1" cy="93.3" rx="5.3" ry="1.9" transform="rotate(11 63.1 93.3)" fill="#a8b2c6" opacity="0.30"/><ellipse cx="92.1" cy="97.8" rx="3.0" ry="1.9" transform="rotate(-22 92.1 97.8)" fill="#a8b2c6" opacity="0.26"/><ellipse cx="87.0" cy="85.5" rx="4.9" ry="1.3" transform="rotate(11 87.0 85.5)" fill="#a8b2c6" opacity="0.20"/><ellipse cx="69.3" cy="128.5" rx="5.9" ry="2.9" transform="rotate(32 69.3 128.5)" fill="#a8b2c6" opacity="0.26"/><ellipse cx="88.1" cy="155.3" rx="4.8" ry="1.5" transform="rotate(10 88.1 155.3)" fill="#a8b2c6" opacity="0.29"/></g>
<g><path d="M218.300 140 L296.500 141 L296.500 192 C275 191 245 188 226.500 184.500 Z" fill="url(#xwall)"/><path d="M218.300 140 L296.500 141 L296.500 192 C275 191 245 188 226.500 184.500 Z" fill="url(#xwsh)"/>
<path d="M291 142 L296.500 142 L296.500 192 L291 191.500 Z" fill="#5a3414" opacity="0.600"/>
<path d="M260 143 C258 160 259 175 261 186 M275 143 C276.500 160 276 176 275 188" stroke="#7a5228" stroke-width="0.800" fill="none"/>
<rect x="232.500" y="144" width="13" height="17.500" rx="3.500" fill="#f0a020"/><path d="M239 144 v17.500 M232.500 150 h13 M232.500 155.500 h13" stroke="#c87a10" stroke-width="0.700"/>
<rect x="292" y="146" width="3" height="22" fill="#e89a20"/>
<path d="M238 113 L239 103.500 L246 103 L246.500 110 Z" fill="#f4f4f6"/><path d="M239 103.500 L246 103 L246.300 105 L239 105.500 Z" fill="#d8323a"/>
<path d="M204.500 139 C215 129 231 113 239.500 108.500 C250 106.300 260 106.300 268.700 107.600 C281 114 300 130 310 140 C290 136 230 133.500 204.500 139 Z" fill="url(#xroof)"/>
<path d="M239.500 108.500 C250 106.300 260 106.300 268.700 107.600 C264 118 262 128 262 135 C250 134.500 236 135 228 136 C230 126 234 116 239.500 108.500 Z" fill="#ffffff" opacity="0.500"/>
<path d="M204 138.500 C230 133 290 135 310.500 140 C311.500 142 310 144.500 307 144 C290 139.500 230 137.500 208 143.500 C204.500 144 203 141 204 138.500 Z" fill="#e0202a"/>
<path d="M245 123 c2 -7 6 -9 9 -6 c4 0 7 3 8 7 c-6 2 -13 2 -17 -1 z" fill="#c8202a"/></g>
<g><circle cx="168.800" cy="167.500" r="18.300" fill="url(#xball)"/><circle cx="168.800" cy="142" r="12" fill="url(#xball)"/>
<circle cx="168.800" cy="157.500" r="1.900" fill="#c81020"/><circle cx="168.800" cy="165.500" r="2.100" fill="#d01020"/><circle cx="168.800" cy="173" r="2.100" fill="#d01020"/>
<circle cx="164.500" cy="139" r="0.900" fill="#222"/><circle cx="173" cy="138.500" r="0.900" fill="#222"/><path d="M162.500 144 q6.500 5 12.500 -0.500" stroke="#222" stroke-width="0.800" stroke-dasharray="1 0.800" fill="none"/><circle cx="169" cy="141.500" r="1.300" fill="#f05030"/>
<path d="M152.500 134 C151 124 156 118.500 161 118.500 C168 120 173 125 175 129.500 C168 129 160 132 155.500 136 Z" fill="#d8222c"/><path d="M154 135 C160 129.500 168 127 175.500 127.500 L177 132 C169 132 161 135 156.500 140 Z" fill="#e2dfc8"/><circle cx="150.500" cy="136.500" r="2.600" fill="#eceaf4"/></g>
</symbol>
</defs>
</svg>
<div id="topbar" style="left:0;top:0;width:1200px;height:34px">
<div style="left:13px;top:3px;width:24px;height:24px;background:#2d2d2d;border-radius:5px"></div>
<svg style="left:13px;top:3px" width="24" height="24" viewBox="0 0 24 24"><path d="M7 3.7 L18 8.7 L18 14.4 L7.6 20.6 L7.6 14 L11 12.5 L7 10 Z" fill="#ff7300"/><path d="M7.6 14 L11 12.5 L18 14.4 L7.6 20.6 Z" fill="#cf7a22"/><path d="M11 12.5 L18 8.7 L18 14.4 Z" fill="#f8891c"/></svg>
<span class="t" style="left:47px;top:8px;font-size:13.500px;color:#fff">登录</span>
<span class="t" style="left:92px;top:8px;font-size:11.500px;color:#dde0e6">文件</span>
<span class="t" style="left:150px;top:8px;font-size:11.500px;color:#dde0e6">关闭</span>
<span class="t" style="left:209px;top:8px;font-size:11.500px;color:#dde0e6">保存</span>
<span class="t" style="left:268px;top:8px;font-size:11.500px;color:#dde0e6">分享</span>
<span class="t" style="left:327px;top:8px;font-size:11.500px;color:#dde0e6">导出</span>
<span class="t" style="left:728px;top:8px;font-size:11.500px;color:#e5b45a;font-weight:bold;font-style:italic">VIP立即开通</span>
<div style="left:805px;top:8px;width:1px;height:14px;background:#3a3d46"></div>
<span class="t" style="left:828px;top:8px;font-size:11.500px;color:#dde0e6">新手教程</span>
<span class="t" style="left:913px;top:8px;font-size:11.500px;color:#dde0e6">客服</span>
<span class="t" style="left:973px;top:8px;font-size:11.500px;color:#dde0e6">申请发票</span>
<span class="t" style="left:1057px;top:8px;font-size:11.500px;color:#dde0e6">设置</span>
<div style="left:1104px;top:8px;width:1px;height:14px;background:#4a4d56"></div>
<svg style="left:1110px;top:4px" width="80" height="24" viewBox="0 0 80 24" fill="none" stroke="#d8dade" stroke-width="1.3"><path d="M5.5 11.5 H18"/><rect x="34.5" y="6.5" width="11" height="10"/><path d="M62.5 6 L73.5 17 M73.5 6 L62.5 17"/></svg>
</div>
<!-- LEFT -->
<div id="left">
<div id="thumbs" style="left:45px;top:0;width:357px;height:365px"><div style="left:12px;top:81px;width:108px;height:61px;overflow:hidden"><div style="left:0;top:0;width:108px;height:61px;background:#020202"></div><span class="t" style="left:18px;top:14px;font-family:'Liberation Serif',serif;font-style:italic;font-size:9.500px;color:#cfcfcf;transform:rotate(-5deg);letter-spacing:-0.400px">Merry Christmas</span><svg style="left:70px;top:8px" width="38" height="36"><g fill="#fff" opacity="0.450"><circle cx="6" cy="8" r="0.600"/><circle cx="10" cy="5" r="0.500"/><circle cx="13" cy="10" r="0.600"/><circle cx="16" cy="14" r="0.500"/><circle cx="9" cy="16" r="0.500"/><circle cx="20" cy="9" r="0.500"/><circle cx="23" cy="18" r="0.600"/><circle cx="18" cy="24" r="0.500"/><circle cx="27" cy="12" r="0.500"/><circle cx="12" cy="28" r="0.500"/><circle cx="30" cy="22" r="0.500"/></g></svg><svg style="left:86px;top:0" width="22" height="22"><path d="M0 0 H22 V22 Z" fill="#1d202b"/></svg><svg style="left:96.700px;top:1.500px" width="9" height="10" viewBox="0 0 9 10" fill="none" stroke="#1aa3ec" stroke-width="1.800" stroke-linecap="round" stroke-linejoin="round"><path d="M4.500 1 V8.500 M1.300 5.500 L4.500 8.700 L7.700 5.500"/></svg></div><span class="t" style="left:-6.5px;top:145px;width:148px;text-align:center;font-size:11.500px;color:#c8ccd6">圣诞快乐</span><div style="left:133px;top:81px;width:108px;height:61px;overflow:hidden"><div style="left:0;top:0;width:108px;height:61px;background:radial-gradient(ellipse 70px 45px at 100% 15%,#1fb0a6 0%,rgba(40,150,190,0.7) 45%,rgba(60,130,220,0) 100%),radial-gradient(ellipse 40px 40px at 0% 100%,#e79cff 0%,rgba(170,100,255,0.8) 40%,rgba(110,90,230,0) 100%),linear-gradient(115deg,#8fc6ff 0%,#5f8df0 35%,#5a62d8 60%,#5a8ad8 100%)"></div><svg style="left:86px;top:0" width="22" height="22"><path d="M0 0 H22 V22 Z" fill="#1d202b"/></svg><svg style="left:96.700px;top:1.500px" width="9" height="10" viewBox="0 0 9 10" fill="none" stroke="#1aa3ec" stroke-width="1.800" stroke-linecap="round" stroke-linejoin="round"><path d="M4.500 1 V8.500 M1.300 5.500 L4.500 8.700 L7.700 5.500"/></svg></div><span class="t" style="left:114.5px;top:145px;width:148px;text-align:center;font-size:11.500px;color:#c8ccd6">颜色滤镜1.5</span><div style="left:12px;top:172px;width:108px;height:61px;overflow:hidden"><div style="left:0;top:0;width:108px;height:61px;background:#1a1c4a"></div><div style="left:-6px;top:12px;width:120px;height:90px;border-radius:50%;background:radial-gradient(closest-side,#ffffff 0%,#ffffff 72%,rgba(255,255,255,0.6) 85%,rgba(255,255,255,0) 100%)"></div><svg style="left:0;top:0" width="108" height="30"><g fill="#e8eaff" opacity="0.85"><circle cx="6" cy="6" r="2"/><circle cx="14" cy="18" r="2.500"/><circle cx="24" cy="5" r="1.500"/><circle cx="33" cy="10" r="2"/><circle cx="45" cy="4" r="1.500"/><circle cx="60" cy="3" r="2"/><circle cx="72" cy="6" r="1.500"/><circle cx="84" cy="8" r="2.500"/><circle cx="96" cy="22" r="2"/><circle cx="102" cy="28" r="1.500"/><circle cx="20" cy="24" r="1.500"/><circle cx="8" cy="28" r="1.500"/></g></svg><svg style="left:86px;top:0" width="22" height="22"><path d="M0 0 H22 V22 Z" fill="#1d202b"/></svg><svg style="left:96.700px;top:1.500px" width="9" height="10" viewBox="0 0 9 10" fill="none" stroke="#1aa3ec" stroke-width="1.800" stroke-linecap="round" stroke-linejoin="round"><path d="M4.500 1 V8.500 M1.300 5.500 L4.500 8.700 L7.700 5.500"/></svg></div><span class="t" style="left:-6.5px;top:236px;width:148px;text-align:center;font-size:11.500px;color:#c8ccd6">粒子</span><div style="left:133px;top:172px;width:108px;height:61px;overflow:hidden"><div style="left:0;top:0;width:108px;height:61px;background:radial-gradient(ellipse 60px 40px at 52% 55%,#a81a12 0%,#6e0a06 55%,#3a0302 100%)"></div><div style="left:0;top:40px;width:108px;height:21px;background:linear-gradient(#a01008,#c81a10)"></div><svg style="left:0;top:0" width="108" height="61"><g fill="none" stroke="#ff8a6a" stroke-width="0.8" opacity="0.7"><circle cx="56" cy="30" r="22"/><circle cx="56" cy="30" r="25"/><circle cx="56" cy="30" r="28"/></g><circle cx="60" cy="30" r="14" fill="#f7e6e2"/><path d="M50 22 q6 -6 14 -3 q-2 4 -6 4 q0 4 -5 3 z M62 30 q6 -2 8 3 q-2 6 -6 6 q-3 -4 -2 -9z M48 34 q4 6 8 10 q-8 0 -10 -8z" fill="#8a1008"/></svg><svg style="left:86px;top:0" width="22" height="22"><path d="M0 0 H22 V22 Z" fill="#1d202b"/></svg><svg style="left:96.700px;top:1.500px" width="9" height="10" viewBox="0 0 9 10" fill="none" stroke="#1aa3ec" stroke-width="1.800" stroke-linecap="round" stroke-linejoin="round"><path d="M4.500 1 V8.500 M1.300 5.500 L4.500 8.700 L7.700 5.500"/></svg></div><span class="t" style="left:114.5px;top:236px;width:148px;text-align:center;font-size:11.500px;color:#c8ccd6">地球6</span><div style="left:12px;top:262px;width:108px;height:61px;overflow:hidden"><div style="left:0;top:0;width:108px;height:61px;background:#04070c"></div><div style="left:0;top:8px;width:108px;height:44px;background:radial-gradient(ellipse 100px 18px at 50% 50%,#4484b4 0%,#2f6a98 40%,rgba(24,58,90,0.600) 72%,rgba(4,7,12,0) 100%)"></div><div style="left:44px;top:22px;width:20px;height:16px;background:radial-gradient(closest-side,#0a1420 0%,rgba(10,20,32,0) 100%)"></div><svg style="left:86px;top:0" width="22" height="22"><path d="M0 0 H22 V22 Z" fill="#1d202b"/></svg><svg style="left:96.700px;top:1.500px" width="9" height="10" viewBox="0 0 9 10" fill="none" stroke="#1aa3ec" stroke-width="1.800" stroke-linecap="round" stroke-linejoin="round"><path d="M4.500 1 V8.500 M1.300 5.500 L4.500 8.700 L7.700 5.500"/></svg></div><span class="t" style="left:-6.5px;top:326px;width:148px;text-align:center;font-size:11.500px;color:#c8ccd6">光效（3）</span><div style="left:133px;top:262px;width:108px;height:61px;overflow:hidden"><svg style="left:0;top:0" width="108" height="61"><use href="#xmas" width="108" height="61"/></svg><div style="left:0;top:0;width:108px;height:61px;background:linear-gradient(90deg,rgba(4,10,30,0.100) 0%,rgba(4,10,30,0.150) 50%,rgba(4,10,30,0.600) 100%)"></div><span class="t" style="left:37px;top:8px;font-family:'Liberation Serif',serif;font-size:9px;line-height:10.500px;color:#aebcd8;font-weight:bold;white-space:normal;width:46px;text-align:center;transform:scaleX(0.720);transform-origin:0 0">MERRY CHRISTMAS</span></div><span class="t" style="left:114.5px;top:326px;width:148px;text-align:center;font-size:11.500px;color:#c8ccd6">圣诞快乐1</span><div style="left:12px;top:353px;width:108px;height:61px;overflow:hidden"><div style="left:0;top:0;width:108px;height:61px;background:linear-gradient(90deg,#2f66d8 0%,#2a80d0 40%,#1fb0a6 90%)"></div><svg style="left:86px;top:0" width="22" height="22"><path d="M0 0 H22 V22 Z" fill="#1d202b"/></svg><svg style="left:96.700px;top:1.500px" width="9" height="10" viewBox="0 0 9 10" fill="none" stroke="#1aa3ec" stroke-width="1.800" stroke-linecap="round" stroke-linejoin="round"><path d="M4.500 1 V8.500 M1.300 5.500 L4.500 8.700 L7.700 5.500"/></svg></div><div style="left:133px;top:353px;width:108px;height:61px;overflow:hidden"><div style="left:0;top:0;width:108px;height:61px;background:#050505"></div><svg style="left:86px;top:0" width="22" height="22"><path d="M0 0 H22 V22 Z" fill="#1d202b"/></svg><svg style="left:96.700px;top:1.500px" width="9" height="10" viewBox="0 0 9 10" fill="none" stroke="#1aa3ec" stroke-width="1.800" stroke-linecap="round" stroke-linejoin="round"><path d="M4.500 1 V8.500 M1.300 5.500 L4.500 8.700 L7.700 5.500"/></svg></div></div>
<div class="hd"></div>
<svg style="left:15px;top:4px" width="24" height="20" viewBox="0 0 24 20" fill="none" stroke="#1a9fe8" stroke-width="1.2" stroke-linejoin="round" stroke-linecap="round"><path d="M3.5 8.5 H20.5 V15.5 Q20.5 16.8 19.2 16.8 H4.800 Q3.5 16.8 3.5 15.5 Z"/><path d="M3.5 8.5 L6.5 3.2 H17.5 L20.5 8.5"/><path d="M10 8.5 V11.8 L12 10.8 L14 11.8 V8.5"/></svg><span class="t" style="left:-3px;top:25px;width:60px;text-align:center;font-size:11.5px;color:#1a9fe8">本地素材</span><svg style="left:71px;top:4px" width="24" height="20" viewBox="0 0 24 20" fill="none" stroke="#ee5253" stroke-width="1.2" stroke-linejoin="round" stroke-linecap="round"><rect x="3.300" y="2.800" width="17.400" height="14" rx="1"/><path d="M7.200 2.800 V16.8 M16.8 2.800 V16.8 M3.300 6.300 H7.200 M3.300 9.800 H7.200 M3.300 13.300 H7.200 M16.800 6.300 H20.700 M16.800 9.800 H20.700 M16.800 13.300 H20.700"/></svg><span class="t" style="left:53px;top:25px;width:60px;text-align:center;font-size:11.5px;color:#ee5253">视频</span><svg style="left:119px;top:4px" width="24" height="20" viewBox="0 0 24 20" fill="none" stroke="#1a9fe8" stroke-width="1.2" stroke-linejoin="round" stroke-linecap="round"><path d="M13.5 5.5 H4.800 Q3.800 5.5 3.800 6.500 V15.800 Q3.800 16.800 4.800 16.800 H18 Q19 16.800 19 15.800 V11"/><circle cx="18" cy="6.800" r="4.200"/></svg><span class="t" style="left:101px;top:25px;width:60px;text-align:center;font-size:11.5px;color:#1a9fe8">素材库</span><svg style="left:169px;top:4px" width="24" height="20" viewBox="0 0 24 20" fill="none" stroke="#1a9fe8" stroke-width="1.2" stroke-linejoin="round" stroke-linecap="round"><rect x="3.500" y="3" width="17" height="13" rx="1"/><path d="M3.500 10 C6 7.500 8 7.500 10.500 10 C12.500 12 14 9.500 16 9 C18 8.600 19 11 20.500 11.500"/></svg><span class="t" style="left:151px;top:24px;width:60px;text-align:center;font-size:11.5px;color:#1a9fe8">图片</span><svg style="left:212px;top:4px" width="24" height="20" viewBox="0 0 24 20" fill="none" stroke="#1a9fe8" stroke-width="1.2" stroke-linejoin="round" stroke-linecap="round"><circle cx="5.800" cy="14.800" r="2.300"/><circle cx="16.200" cy="14.200" r="2.300"/><path d="M8.100 14.800 V3.200 H18.500 V14.200 M8.100 7 H18.500"/></svg><span class="t" style="left:194px;top:25px;width:60px;text-align:center;font-size:11.5px;color:#1a9fe8">音乐</span><svg style="left:255px;top:4px" width="24" height="20" viewBox="0 0 24 20" fill="none" stroke="#1a9fe8" stroke-width="1.2" stroke-linejoin="round" stroke-linecap="round"><path d="M4 7 H20 L16 3.500 M20 12.500 H4 L8 16"/></svg><span class="t" style="left:237px;top:25px;width:60px;text-align:center;font-size:11.5px;color:#1a9fe8">转场</span><svg style="left:299px;top:4px" width="24" height="20" viewBox="0 0 24 20" fill="none" stroke="#1a9fe8" stroke-width="1.2" stroke-linejoin="round" stroke-linecap="round"><circle cx="8.500" cy="9.800" r="7"/><circle cx="15.500" cy="9.800" r="7"/></svg><span class="t" style="left:281px;top:25px;width:60px;text-align:center;font-size:11.5px;color:#1a9fe8">滤镜</span><svg style="left:342px;top:4px" width="24" height="20" viewBox="0 0 24 20" fill="none" stroke="#1a9fe8" stroke-width="1.2" stroke-linejoin="round" stroke-linecap="round"><path d="M4.500 6.500 V3 H19.500 V6.500 M12 3 V16.500 M8.500 16.500 H15.500" stroke-width="2.200" stroke-linecap="butt" stroke-linejoin="miter"/></svg><span class="t" style="left:324px;top:25px;width:60px;text-align:center;font-size:11.5px;color:#1a9fe8">文字</span>
<div style="left:369px;top:8px;width:1px;height:28px;background:#3a4154"></div>
<svg style="left:378px;top:14px" width="16" height="16" viewBox="0 0 16 16" fill="none" stroke="#aab2c6" stroke-width="1.300"><path d="M1.500 1.500 L8 8 L1.500 14.500 M7.500 1.500 L14 8 L7.500 14.500"/></svg>
<div style="left:0;top:45px;width:45px;height:320px;background:#222633;overflow:hidden"><span class="t" style="left:15px;top:15.5px;font-size:11.500px;color:#c6cad4">收藏</span><span class="t" style="left:15px;top:41.1px;font-size:11.500px;color:#c6cad4">热门</span><span class="t" style="left:15px;top:66.7px;font-size:11.500px;color:#1a9fe8">视频素材</span><span class="t" style="left:15px;top:92.3px;font-size:11.500px;color:#c6cad4">精美片头</span><span class="t" style="left:15px;top:117.9px;font-size:11.500px;color:#c6cad4">背景样式</span><span class="t" style="left:15px;top:143.5px;font-size:11.500px;color:#c6cad4">转场片段</span><span class="t" style="left:15px;top:169.1px;font-size:11.500px;color:#c6cad4">故障片段</span><span class="t" style="left:15px;top:194.7px;font-size:11.500px;color:#c6cad4">搞笑素材</span><div style="left:0;top:67px;width:4px;height:12px;background:#1a9fe8"></div><div style="left:0;top:311px;width:20px;height:8px;border-radius:4px;background:#3a4052"></div></div>
<div style="left:45px;top:45px;width:1px;height:320px;background:#191c25"></div>
<div style="left:46px;top:45px;width:356px;height:43px;background:#222634"></div>
<div style="left:46px;top:87px;width:356px;height:1px;background:#2a2f3c"></div>
<svg style="left:61px;top:58px" width="20" height="19" viewBox="0 0 22 20"><path d="M1 2.500 Q1 1.500 2 1.500 H7 L9.500 4 H20 Q21 4 21 5 V17.500 Q21 18.500 20 18.500 H2 Q1 18.500 1 17.500 Z" fill="#1a9fe8"/><path d="M7 11.300 H12 V8.300 L16 11.300 L12 14.300 V11.300" fill="#fff" stroke="#fff" stroke-width="1.500" stroke-linejoin="round"/></svg>
<span class="t" style="left:89px;top:60px;color:#e0e3ea">导入</span>
<svg style="left:132px;top:55px" width="24" height="24" viewBox="0 0 24 24"><path d="M2 13 L13 2 L22 11 L11 22 Z" fill="#1a9fe8"/><path d="M2 13 L7.500 18.500 L2.500 21.500 Z M2 13 L11 22 L2.500 21.500Z" fill="#fff"/><path d="M10.500 4.500 L19.500 13.500" stroke="#fff" stroke-width="1.200"/></svg>
<span class="t" style="left:162px;top:60px;color:#e0e3ea">涂鸦</span>
<div style="left:259px;top:53px;width:129px;height:26px;border-radius:4px;background:#171a22"></div>
<span class="t" style="left:269px;top:58px;color:#6a7080">搜索</span>
<svg style="left:366px;top:58px" width="16" height="16" viewBox="0 0 16 16" fill="none" stroke="#1a9fe8" stroke-width="1.400" stroke-linecap="round"><circle cx="7.500" cy="7.500" r="5.500"/><path d="M11.500 11.800 L13 13.300"/></svg>
<div style="left:395px;top:123px;width:6px;height:8px;border-radius:3px;background:#3a4052"></div>
</div>
<!-- PLAYER -->
<div id="player"><div class="hd"></div>
<span class="t" style="left:15px;top:15px;font-size:11.5px;color:#d0d4dc">播放器</span>
<div style="left:184px;top:12px;width:69px;height:21px;border-radius:4px;background:#171a22"></div>
<span class="t" style="left:195px;top:14px;color:#dfe2e8">1.00 倍</span>
<svg style="left:239px;top:19px" width="10" height="7" viewBox="0 0 10 7" fill="none" stroke="#1a9fe8" stroke-width="1.600" stroke-linecap="round" stroke-linejoin="round"><path d="M1 1 L5 5 L9 1"/></svg>
<div style="left:269px;top:12px;width:84px;height:21px;border-radius:4px;background:#171a22"></div>
<svg style="left:281px;top:18px" width="12" height="9.500" viewBox="0 0 13 11" fill="none" stroke="#dfe2e8" stroke-width="1.100"><rect x="0.600" y="0.600" width="11.800" height="9.800" rx="0.500"/><path d="M5 3.300 L8.300 5.500 L5 7.700 Z" fill="#dfe2e8" stroke="none"/></svg>
<span class="t" style="left:300px;top:14px;color:#dfe2e8">原始</span>
<svg style="left:340px;top:19px" width="10" height="7" viewBox="0 0 10 7" fill="none" stroke="#1a9fe8" stroke-width="1.600" stroke-linecap="round" stroke-linejoin="round"><path d="M1 1 L5 5 L9 1"/></svg>
<svg style="left:0;top:74px" width="357" height="201"><use href="#xmas" width="357" height="201"/></svg>
<div style="left:0;top:304px;width:357px;height:61px;background:#2a3040"></div>
<div style="left:14px;top:322px;width:100px;height:2px;background:#3f4760"></div>
<div style="left:14px;top:322px;width:38px;height:2px;background:#1a9fe8"></div>
<div style="left:46px;top:317px;width:12px;height:12px;border-radius:6px;border:2px solid #1a9fe8;background:#2a3040"></div>
<div style="left:129px;top:311px;width:111px;height:24px;border-radius:4px;background:#171a22"></div>
<span class="t" style="left:140px;top:315px;font-size:15px;color:#dfe2e8">00:00:21:18</span>
<svg style="left:225px;top:314px" width="10" height="18" viewBox="0 0 10 18" fill="none" stroke="#1a9fe8" stroke-width="1.500" stroke-linecap="round" stroke-linejoin="round"><path d="M1.500 6 L5 2.500 L8.500 6 M1.500 12 L5 15.500 L8.500 12"/></svg>
<span class="t" style="left:249px;top:315px;font-size:15px;color:#dfe2e8">/</span>
<span class="t" style="left:264px;top:315px;font-size:15px;color:#dfe2e8">00:00:39:11</span>
<svg style="left:14px;top:340px" width="110" height="18" viewBox="0 0 110 18" fill="none" stroke="#1a9fe8" stroke-width="1.300" stroke-linejoin="round" stroke-linecap="round"><path d="M2.500 2.500 L14.500 9 L2.500 15.500 Z"/><rect x="31.500" y="3" width="12" height="12"/><path d="M71.500 2.500 L62 9 L71.500 15.500 Z M61 2.500 V15.500"/><path d="M91 2.500 L100.500 9 L91 15.500 Z M101.500 2.500 V15.500"/></svg>
<svg style="left:180px;top:340px" width="170" height="18" viewBox="0 0 170 18" fill="none" stroke="#1a9fe8" stroke-width="1.300" stroke-linejoin="round" stroke-linecap="round">
<g transform="translate(3,2)"><rect x="0" y="0" width="12.500" height="12.500" rx="0.500"/><path d="M0 5 H12.500 M4.500 0 V5"/></g>
<g transform="translate(32,2)"><path d="M0 3.500 V0 H3.500 M9.500 0 H13 V3.500 M13 9.500 V13 H9.500 M3.500 13 H0 V9.500"/><circle cx="6.200" cy="6.200" r="2.800"/><path d="M8.300 8.300 L10 10"/></g>
<g transform="translate(61,2)"><rect x="0" y="0" width="13" height="10.500" rx="0.500"/><path d="M2.500 3.300 H10.500 M2.500 5.500 H10.500 M2.500 7.700 H10.500 M3 13 H10"/></g>
<g transform="translate(89,2)"><path d="M0 3 H3.500 L5 1 H10 L11.500 3 H15 V12.500 H0 Z"/><circle cx="7.500" cy="7.500" r="2.800"/></g>
<g transform="translate(119,2)"><path d="M0 4 H4 L9 0.500 V13 L4 9.500 H0 Z"/><path d="M12 3 Q14.500 6.700 12 10.500"/></g>
<g transform="translate(150,2)"><path d="M0 4 V0 H4 M9 0 H13 V4 M13 9 V13 H9 M4 13 H0 V9"/></g>
</svg>
<div style="left:294px;top:227px;width:25px;height:112px;border-radius:3px;background:#2a3040;box-shadow:0 0 3px rgba(0,0,0,0.5)"></div>
<div style="left:305px;top:235px;width:2px;height:35px;background:#3f4760"></div>
<div style="left:305px;top:270px;width:2px;height:37px;background:#1a9fe8"></div>
<div style="left:301px;top:265px;width:10px;height:10px;border-radius:5px;background:#b9c4e4"></div>
<span class="t" style="left:294px;top:316px;width:25px;text-align:center;font-size:11px;color:#dfe2e8">50</span>
</div>
<!-- RIGHT -->
<div id="right">
<span class="t" style="left:104px;top:37px;font-size:11px;color:#c8ccd6">无</span>
<span class="t" style="left:173px;top:37px;font-size:11px;color:#c8ccd6">模式1</span>
<span class="t" style="left:251px;top:37px;font-size:11px;color:#c8ccd6">模式2</span>
<span class="t" style="left:324px;top:37px;font-size:11px;color:#c8ccd6">模式3</span>
<div class="hd"></div>
<span class="t" style="left:12px;top:15px;font-size:13px;color:#d5d8df">视频编辑 :</span>
<span class="t" style="left:87px;top:15px;color:#d5d8df">基本</span>
<span class="t" style="left:138px;top:15px;color:#d5d8df">画面</span>
<span class="t" style="left:189px;top:15px;color:#1a9fe8">声音</span>
<div style="left:189px;top:36px;width:23px;height:2px;background:#1a9fe8"></div>
<span class="t" style="left:239px;top:15px;color:#d5d8df">动画</span>
<span class="t" style="left:290px;top:15px;color:#d5d8df">背景</span>
<span class="t" style="left:341px;top:15px;color:#d5d8df">蒙版</span>
<div style="left:18px;top:58px;width:372px;height:1px;background:#15181f"></div>
<span class="t" style="left:17px;top:70px;font-size:13px;color:#d5d8df">高级音效:</span>
<span class="t" style="left:114px;top:69px;font-size:11.500px;color:#1a9fe8">均衡器</span>
<div style="left:114px;top:86px;width:35px;height:2px;background:#1a9fe8"></div>
<span class="t" style="left:178px;top:69px;font-size:11.500px;color:#d5d8df">混响</span>
<div style="left:27px;top:104px;width:91px;height:51px;background:linear-gradient(110deg,#2cacfa 0%,#2f90f5 50%,#3359ee 100%);border-radius:2px;overflow:hidden"><svg style="left:27.300px;top:8px" width="36" height="36" viewBox="0 0 36 36"><circle cx="18" cy="20" r="10.400" fill="#fff"/><circle cx="13.600" cy="17" r="1.900" fill="#2f8ef2"/><g fill="#fff"><rect x="8.6" y="5.9" width="2" height="2" rx="0.500"/><rect x="17.0" y="4.1" width="2" height="2" rx="0.500"/><rect x="24.5" y="5.9" width="2" height="2" rx="0.500"/><rect x="2.5" y="11.5" width="2" height="2" rx="0.500"/><rect x="30.5" y="11.5" width="2" height="2" rx="0.500"/><rect x="1.8" y="19.0" width="2" height="2" rx="0.500"/><rect x="32.2" y="19.0" width="2" height="2" rx="0.500"/></g></svg><svg style="left:69px;top:29px" width="22" height="22" viewBox="0 0 22 22"><path d="M22 0 V22 H0 Z" fill="#ee4b4b"/><path d="M10.500 15 L13.500 18 L19 11.500" fill="none" stroke="#fff" stroke-width="1.800" stroke-linecap="round" stroke-linejoin="round"/></svg></div><span class="t" style="left:17px;top:157px;width:111px;text-align:center;font-size:11.500px;color:#1a9fe8">原声</span><div style="left:127px;top:104px;width:91px;height:51px;background:linear-gradient(110deg,#2cacfa 0%,#2f90f5 50%,#3359ee 100%);border-radius:2px;overflow:hidden"><svg style="left:27.300px;top:8px" width="36" height="36" viewBox="0 0 36 36"><circle cx="18" cy="20" r="10.400" fill="#fff"/><circle cx="13.600" cy="17" r="1.900" fill="#2f8ef2"/><g fill="#fff"><rect x="8.6" y="5.9" width="2" height="2" rx="0.500"/><rect x="17.0" y="4.1" width="2" height="2" rx="0.500"/><rect x="24.5" y="5.9" width="2" height="2" rx="0.500"/><rect x="2.5" y="11.5" width="2" height="2" rx="0.500"/><rect x="30.5" y="11.5" width="2" height="2" rx="0.500"/><rect x="1.8" y="19.0" width="2" height="2" rx="0.500"/><rect x="32.2" y="19.0" width="2" height="2" rx="0.500"/></g></svg></div><span class="t" style="left:117px;top:157px;width:111px;text-align:center;font-size:11.500px;color:#d5d8df">电子</span><div style="left:227px;top:104px;width:91px;height:51px;background:linear-gradient(110deg,#2cacfa 0%,#2f90f5 50%,#3359ee 100%);border-radius:2px;overflow:hidden"><svg style="left:27.300px;top:8px" width="36" height="36" viewBox="0 0 36 36"><circle cx="18" cy="20" r="10.400" fill="#fff"/><circle cx="13.600" cy="17" r="1.900" fill="#2f8ef2"/><g fill="#fff"><rect x="8.6" y="5.9" width="2" height="2" rx="0.500"/><rect x="17.0" y="4.1" width="2" height="2" rx="0.500"/><rect x="24.5" y="5.9" width="2" height="2" rx="0.500"/><rect x="2.5" y="11.5" width="2" height="2" rx="0.500"/><rect x="30.5" y="11.5" width="2" height="2" rx="0.500"/><rect x="1.8" y="19.0" width="2" height="2" rx="0.500"/><rect x="32.2" y="19.0" width="2" height="2" rx="0.500"/></g></svg></div><span class="t" style="left:217px;top:157px;width:111px;text-align:center;font-size:11.500px;color:#d5d8df">耳机</span><div style="left:27px;top:176px;width:91px;height:51px;background:linear-gradient(110deg,#2cacfa 0%,#2f90f5 50%,#3359ee 100%);border-radius:2px;overflow:hidden"><svg style="left:27.300px;top:8px" width="36" height="36" viewBox="0 0 36 36"><circle cx="18" cy="20" r="10.400" fill="#fff"/><circle cx="13.600" cy="17" r="1.900" fill="#2f8ef2"/><g fill="#fff"><rect x="8.6" y="5.9" width="2" height="2" rx="0.500"/><rect x="17.0" y="4.1" width="2" height="2" rx="0.500"/><rect x="24.5" y="5.9" width="2" height="2" rx="0.500"/><rect x="2.5" y="11.5" width="2" height="2" rx="0.500"/><rect x="30.5" y="11.5" width="2" height="2" rx="0.500"/><rect x="1.8" y="19.0" width="2" height="2" rx="0.500"/><rect x="32.2" y="19.0" width="2" height="2" rx="0.500"/></g></svg></div><span class="t" style="left:17px;top:229px;width:111px;text-align:center;font-size:11.500px;color:#d5d8df">古典</span><div style="left:127px;top:176px;width:91px;height:51px;background:linear-gradient(110deg,#2cacfa 0%,#2f90f5 50%,#3359ee 100%);border-radius:2px;overflow:hidden"><svg style="left:27.300px;top:8px" width="36" height="36" viewBox="0 0 36 36"><circle cx="18" cy="20" r="10.400" fill="#fff"/><circle cx="13.600" cy="17" r="1.900" fill="#2f8ef2"/><g fill="#fff"><rect x="8.6" y="5.9" width="2" height="2" rx="0.500"/><rect x="17.0" y="4.1" width="2" height="2" rx="0.500"/><rect x="24.5" y="5.9" width="2" height="2" rx="0.500"/><rect x="2.5" y="11.5" width="2" height="2" rx="0.500"/><rect x="30.5" y="11.5" width="2" height="2" rx="0.500"/><rect x="1.8" y="19.0" width="2" height="2" rx="0.500"/><rect x="32.2" y="19.0" width="2" height="2" rx="0.500"/></g></svg></div><span class="t" style="left:117px;top:229px;width:111px;text-align:center;font-size:11.500px;color:#d5d8df">温和</span><div style="left:227px;top:176px;width:91px;height:51px;background:linear-gradient(110deg,#2cacfa 0%,#2f90f5 50%,#3359ee 100%);border-radius:2px;overflow:hidden"><svg style="left:27.300px;top:8px" width="36" height="36" viewBox="0 0 36 36"><circle cx="18" cy="20" r="10.400" fill="#fff"/><circle cx="13.600" cy="17" r="1.900" fill="#2f8ef2"/><g fill="#fff"><rect x="8.6" y="5.9" width="2" height="2" rx="0.500"/><rect x="17.0" y="4.1" width="2" height="2" rx="0.500"/><rect x="24.5" y="5.9" width="2" height="2" rx="0.500"/><rect x="2.5" y="11.5" width="2" height="2" rx="0.500"/><rect x="30.5" y="11.5" width="2" height="2" rx="0.500"/><rect x="1.8" y="19.0" width="2" height="2" rx="0.500"/><rect x="32.2" y="19.0" width="2" height="2" rx="0.500"/></g></svg></div><span class="t" style="left:217px;top:229px;width:111px;text-align:center;font-size:11.500px;color:#d5d8df">摇滚</span><div style="left:27px;top:247px;width:91px;height:51px;background:linear-gradient(110deg,#2cacfa 0%,#2f90f5 50%,#3359ee 100%);border-radius:2px;overflow:hidden"><svg style="left:27.300px;top:8px" width="36" height="36" viewBox="0 0 36 36"><circle cx="18" cy="20" r="10.400" fill="#fff"/><circle cx="13.600" cy="17" r="1.900" fill="#2f8ef2"/><g fill="#fff"><rect x="8.6" y="5.9" width="2" height="2" rx="0.500"/><rect x="17.0" y="4.1" width="2" height="2" rx="0.500"/><rect x="24.5" y="5.9" width="2" height="2" rx="0.500"/><rect x="2.5" y="11.5" width="2" height="2" rx="0.500"/><rect x="30.5" y="11.5" width="2" height="2" rx="0.500"/><rect x="1.8" y="19.0" width="2" height="2" rx="0.500"/><rect x="32.2" y="19.0" width="2" height="2" rx="0.500"/></g></svg></div><span class="t" style="left:18px;top:300px;width:111px;text-align:center;font-size:11.500px;color:#d5d8df">增强低音</span>
<div style="left:18px;top:335px;width:69px;height:22px;border-radius:3px;background:#2d3242"></div>
<span class="t" style="left:18px;top:338px;width:69px;text-align:center;font-size:11.500px;color:#d5d8df">自定义</span>
<div style="left:408.500px;top:162px;width:6px;height:202px;border-radius:3px;background:#343a4d"></div>
</div>
<!-- TIMELINE -->
<div id="tl">
<div style="left:0;top:76px;width:194px;height:256px;background:#232734"></div>
<div style="left:194px;top:76px;width:985px;height:54px;background:#1f232d"></div><div style="left:194px;top:130px;width:985px;height:44px;background:#262b39"></div><div style="left:194px;top:174px;width:985px;height:35px;background:#1f232d"></div><div style="left:194px;top:209px;width:985px;height:35px;background:#262b39"></div><div style="left:194px;top:244px;width:985px;height:38px;background:#1f232d"></div><div style="left:194px;top:282px;width:985px;height:38px;background:#262b39"></div><div style="left:194px;top:320px;width:985px;height:30px;background:#1f232d"></div>
<div style="left:0;top:41px;width:1189px;height:36px;background:#232734"></div><div style="left:68px;top:45px;width:52px;height:29px;border-radius:3px;background:#2c3140"></div><span class="t" style="left:68px;top:51px;width:52px;text-align:center;font-size:11.500px;color:#d5d8df">封面</span><span class="t" style="left:194.2px;top:51.0px;font-size:10px;color:#bcc0cc">00:00:00:00</span><span class="t" style="left:288.7px;top:51.0px;font-size:10px;color:#bcc0cc">00:00:03:10</span><span class="t" style="left:383.1px;top:51.0px;font-size:10px;color:#bcc0cc">00:00:06:20</span><span class="t" style="left:477.6px;top:51.0px;font-size:10px;color:#bcc0cc">00:00:10:00</span><span class="t" style="left:572.0px;top:51.0px;font-size:10px;color:#bcc0cc">00:00:13:10</span><span class="t" style="left:666.5px;top:51.0px;font-size:10px;color:#bcc0cc">00:00:16:20</span><span class="t" style="left:761.0px;top:51.0px;font-size:10px;color:#bcc0cc">00:00:20:00</span><span class="t" style="left:855.4px;top:51.0px;font-size:10px;color:#bcc0cc">00:00:23:10</span><span class="t" style="left:949.9px;top:51.0px;font-size:10px;color:#bcc0cc">00:00:26:20</span><span class="t" style="left:1044.3px;top:51.0px;font-size:10px;color:#bcc0cc">00:00:30:00</span><span class="t" style="left:1138.8px;top:51.0px;font-size:10px;color:#bcc0cc">00:00:33:10</span><svg style="left:0;top:0" width="1189" height="80" viewBox="7 407 1189 80" fill="none"><path d="M201.50 474 V483 M210.94 479 V483 M220.39 479 V483 M229.84 479 V483 M239.28 479 V483 M248.72 479 V483 M258.17 479 V483 M267.62 479 V483 M277.06 479 V483 M286.50 479 V483 M295.95 474 V483 M305.39 479 V483 M314.84 479 V483 M324.29 479 V483 M333.73 479 V483 M343.18 479 V483 M352.62 479 V483 M362.06 479 V483 M371.51 479 V483 M380.95 479 V483 M390.40 474 V483 M399.85 479 V483 M409.29 479 V483 M418.74 479 V483 M428.18 479 V483 M437.62 479 V483 M447.07 479 V483 M456.51 479 V483 M465.96 479 V483 M475.41 479 V483 M484.85 474 V483 M494.30 479 V483 M503.74 479 V483 M513.18 479 V483 M522.63 479 V483 M532.08 479 V483 M541.52 479 V483 M550.97 479 V483 M560.41 479 V483 M569.86 479 V483 M579.30 474 V483 M588.75 479 V483 M598.19 479 V483 M607.63 479 V483 M617.08 479 V483 M626.52 479 V483 M635.97 479 V483 M645.42 479 V483 M654.86 479 V483 M664.31 479 V483 M673.75 474 V483 M683.19 479 V483 M692.64 479 V483 M702.09 479 V483 M711.53 479 V483 M720.98 479 V483 M730.42 479 V483 M739.87 479 V483 M749.31 479 V483 M758.75 479 V483 M768.20 474 V483 M777.64 479 V483 M787.09 479 V483 M796.54 479 V483 M805.98 479 V483 M815.42 479 V483 M824.87 479 V483 M834.32 479 V483 M843.76 479 V483 M853.21 479 V483 M862.65 474 V483 M872.10 479 V483 M881.54 479 V483 M890.99 479 V483 M900.43 479 V483 M909.88 479 V483 M919.32 479 V483 M928.77 479 V483 M938.21 479 V483 M947.65 479 V483 M957.10 474 V483 M966.54 479 V483 M975.99 479 V483 M985.44 479 V483 M994.88 479 V483 M1004.33 479 V483 M1013.77 479 V483 M1023.21 479 V483 M1032.66 479 V483 M1042.11 479 V483 M1051.55 474 V483 M1061.00 479 V483 M1070.44 479 V483 M1079.88 479 V483 M1089.33 479 V483 M1098.78 479 V483 M1108.22 479 V483 M1117.66 479 V483 M1127.11 479 V483 M1136.56 479 V483 M1146.00 474 V483 M1155.45 479 V483 M1164.89 479 V483 M1174.34 479 V483 M1183.78 479 V483 M1193.22 479 V483 " stroke="#3f5f8f" stroke-width="1"/></svg>
<div style="left:194px;top:75.5px;width:995px;height:1.500px;background:#d04a4a"></div>
<div style="left:0;top:76px;width:194px;height:1px;background:#171a22"></div><span class="t" style="left:43px;top:95.8px;font-size:13.500px;color:#c9cdd8">视频</span><div style="left:0;top:130px;width:194px;height:1px;background:#171a22"></div><span class="t" style="left:43px;top:144.8px;font-size:13.500px;color:#c9cdd8">画中画1</span><div style="left:0;top:174px;width:194px;height:1px;background:#171a22"></div><span class="t" style="left:43px;top:184.3px;font-size:13.500px;color:#c9cdd8">文字1</span><div style="left:0;top:209px;width:194px;height:1px;background:#171a22"></div><span class="t" style="left:43px;top:219.3px;font-size:13.500px;color:#c9cdd8">文字2</span><div style="left:0;top:244px;width:194px;height:1px;background:#171a22"></div><span class="t" style="left:43px;top:255.8px;font-size:13.500px;color:#c9cdd8">音乐1</span><div style="left:0;top:282px;width:194px;height:1px;background:#171a22"></div><span class="t" style="left:43px;top:293.8px;font-size:13.500px;color:#c9cdd8">配音1</span><div style="left:0;top:320px;width:194px;height:1px;background:#171a22"></div><span class="t" style="left:43px;top:327.8px;font-size:13.500px;color:#c9cdd8">字幕1</span><svg style="left:0;top:0" width="200" height="332" viewBox="7 407 200 332" overflow="hidden"><g transform="translate(25.5,505.0)" stroke="#c9cdd8" stroke-width="1.100" fill="none"><rect x="0" y="0" width="15" height="14" rx="0.500"/><path d="M3.300 0 V14 M11.700 0 V14 M0 3.500 H3.300 M0 7 H3.300 M0 10.500 H3.300 M11.700 3.500 H15 M11.700 7 H15 M11.700 10.500 H15"/></g><g transform="translate(123.3,506.2)"><rect x="0" y="4.800" width="10" height="6.400" rx="0.600" fill="#e2e5ec"/><rect x="4.100" y="7" width="1.800" height="2.200" fill="#232734"/><path d="M3.300 3.300 V2.900 A2.900 2.900 0 0 1 9.100 2.900 V5" fill="none" stroke="#e2e5ec" stroke-width="1.300"/></g><g transform="translate(146,506.3)" fill="none" stroke="#e2e5ec" stroke-width="1.100"><path d="M0.500 5.700 Q7.500 -2.500 14.500 5.700 Q7.500 13.900 0.500 5.700 Z"/><circle cx="7.500" cy="5.700" r="2.500"/><circle cx="7.500" cy="5.700" r="0.900" fill="#e2e5ec" stroke="none"/></g><g transform="translate(173.5,506.3)" fill="none" stroke="#e2e5ec" stroke-width="1.100" stroke-linejoin="round" stroke-linecap="round"><path d="M0.500 5.700 L7.500 0.500 V11 Z"/><path d="M10 3.500 Q11.500 5.700 10 8 M12 1.800 Q14.800 5.700 12 9.700"/></g><g transform="translate(25.5,554.0)" stroke="#c9cdd8" stroke-width="1.200" fill="none"><rect x="0" y="0" width="15" height="14" rx="1"/><path d="M5.500 14 V6.500 H15"/></g><g transform="translate(123.3,555.2)"><rect x="0" y="4.800" width="10" height="6.400" rx="0.600" fill="#e2e5ec"/><rect x="4.100" y="7" width="1.800" height="2.200" fill="#232734"/><path d="M3.300 3.300 V2.900 A2.900 2.900 0 0 1 9.100 2.900 V5" fill="none" stroke="#e2e5ec" stroke-width="1.300"/></g><g transform="translate(146,555.3)" fill="none" stroke="#e2e5ec" stroke-width="1.100"><path d="M0.500 5.700 Q7.500 -2.500 14.500 5.700 Q7.500 13.900 0.500 5.700 Z"/><circle cx="7.500" cy="5.700" r="2.500"/><circle cx="7.500" cy="5.700" r="0.900" fill="#e2e5ec" stroke="none"/></g><g transform="translate(173.5,555.3)" fill="none" stroke="#e2e5ec" stroke-width="1.100" stroke-linejoin="round" stroke-linecap="round"><path d="M0.500 5.700 L7.500 0.500 V11 Z"/><path d="M10 3.500 Q11.500 5.700 10 8 M12 1.800 Q14.800 5.700 12 9.700"/></g><g transform="translate(26,593.5)" stroke="#c9cdd8" stroke-width="1.300" fill="none"><path d="M0.500 3 V0.700 H13.500 V3 M7 0.700 V14 M3.500 14.200 H10.500"/></g><g transform="translate(123.3,594.7)"><rect x="0" y="4.800" width="10" height="6.400" rx="0.600" fill="#e2e5ec"/><rect x="4.100" y="7" width="1.800" height="2.200" fill="#232734"/><path d="M3.300 3.300 V2.900 A2.900 2.900 0 0 1 9.100 2.900 V5" fill="none" stroke="#e2e5ec" stroke-width="1.300"/></g><g transform="translate(146,594.8)" fill="none" stroke="#e2e5ec" stroke-width="1.100"><path d="M0.500 5.700 Q7.500 -2.500 14.500 5.700 Q7.500 13.900 0.500 5.700 Z"/><circle cx="7.500" cy="5.700" r="2.500"/><circle cx="7.500" cy="5.700" r="0.900" fill="#e2e5ec" stroke="none"/></g><g transform="translate(26,628.5)" stroke="#c9cdd8" stroke-width="1.300" fill="none"><path d="M0.500 3 V0.700 H13.500 V3 M7 0.700 V14 M3.500 14.200 H10.500"/></g><g transform="translate(123.3,629.7)"><rect x="0" y="4.800" width="10" height="6.400" rx="0.600" fill="#e2e5ec"/><rect x="4.100" y="7" width="1.800" height="2.200" fill="#232734"/><path d="M3.300 3.300 V2.900 A2.900 2.900 0 0 1 9.100 2.900 V5" fill="none" stroke="#e2e5ec" stroke-width="1.300"/></g><g transform="translate(146,629.8)" fill="none" stroke="#e2e5ec" stroke-width="1.100"><path d="M0.500 5.700 Q7.500 -2.500 14.500 5.700 Q7.500 13.900 0.500 5.700 Z"/><circle cx="7.500" cy="5.700" r="2.500"/><circle cx="7.500" cy="5.700" r="0.900" fill="#e2e5ec" stroke="none"/></g><g transform="translate(26,665.0)" stroke="#c9cdd8" stroke-width="1.200" fill="none"><circle cx="2.500" cy="11.500" r="2.200"/><circle cx="11.500" cy="10.500" r="2.200"/><path d="M4.700 11.500 V1 H13.700 V10.500 M4.700 4.500 H13.700"/></g><g transform="translate(123.3,666.2)"><rect x="0" y="4.800" width="10" height="6.400" rx="0.600" fill="#e2e5ec"/><rect x="4.100" y="7" width="1.800" height="2.200" fill="#232734"/><path d="M3.300 3.300 V2.900 A2.900 2.900 0 0 1 9.100 2.900 V5" fill="none" stroke="#e2e5ec" stroke-width="1.300"/></g><g transform="translate(149.5,666.3)" fill="none" stroke="#e2e5ec" stroke-width="1.100" stroke-linejoin="round" stroke-linecap="round"><path d="M0.500 5.700 L7.500 0.500 V11 Z"/><path d="M10 3.500 Q11.500 5.700 10 8 M12 1.800 Q14.800 5.700 12 9.700"/></g><g transform="translate(26,703.0)" stroke="#c9cdd8" stroke-width="1.200" fill="none"><path d="M1 0.500 H12.500 M2.500 0.500 V9.500 H11 V0.500 M6.700 3.500 H11 M6.700 6.500 H11 M6.700 9.500 V14 M0 14 H13.500"/></g><g transform="translate(123.3,704.2)"><rect x="0" y="4.800" width="10" height="6.400" rx="0.600" fill="#e2e5ec"/><rect x="4.100" y="7" width="1.800" height="2.200" fill="#232734"/><path d="M3.300 3.300 V2.900 A2.900 2.900 0 0 1 9.100 2.900 V5" fill="none" stroke="#e2e5ec" stroke-width="1.300"/></g><g transform="translate(149.5,704.3)" fill="none" stroke="#e2e5ec" stroke-width="1.100" stroke-linejoin="round" stroke-linecap="round"><path d="M0.500 5.700 L7.500 0.500 V11 Z"/><path d="M10 3.500 Q11.500 5.700 10 8 M12 1.800 Q14.800 5.700 12 9.700"/></g><g transform="translate(123.3,738.2)"><rect x="0" y="4.800" width="10" height="6.400" rx="0.600" fill="#e2e5ec"/><rect x="4.100" y="7" width="1.800" height="2.200" fill="#232734"/><path d="M3.300 3.300 V2.900 A2.900 2.900 0 0 1 9.100 2.900 V5" fill="none" stroke="#e2e5ec" stroke-width="1.300"/></g><g transform="translate(146,738.3)" fill="none" stroke="#e2e5ec" stroke-width="1.100"><path d="M0.500 5.700 Q7.500 -2.500 14.500 5.700 Q7.500 13.900 0.500 5.700 Z"/><circle cx="7.500" cy="5.700" r="2.500"/><circle cx="7.500" cy="5.700" r="0.900" fill="#e2e5ec" stroke="none"/></g></svg>
<div style="left:194.3px;top:87px;width:142.4px;height:41px;border-radius:3px;background:#00b6f6;border:1px solid #0aa8ff;overflow:hidden"><svg style="left:0;top:0" width="142" height="40"><path d="M69 40 V24 L75 23 L80 24.500 L86 22.500 L92 24 L98 22 L104 23.500 L110 22.500 L116 24 L122 23 L128 21.500 L134 20 L141 19 V40 Z" fill="#0c8ff2"/></svg><div style="left:2px;top:1px;width:67px;height:37px;background:radial-gradient(ellipse 26px 9px at 46% 52%,#1c0c05 0%,rgba(34,14,6,0.850) 60%,rgba(40,14,4,0) 100%),radial-gradient(ellipse 16px 12px at 14% 12%,#f48414 0%,rgba(220,90,10,0.700) 50%,rgba(160,50,0,0) 100%),radial-gradient(ellipse 18px 12px at 22% 98%,#f07a10 0%,rgba(210,80,10,0.700) 50%,rgba(160,50,0,0) 100%),radial-gradient(ellipse 18px 13px at 88% 92%,#f89a24 0%,rgba(230,100,14,0.700) 50%,rgba(160,50,0,0) 100%),radial-gradient(ellipse 18px 12px at 82% 6%,#e8680e 0%,rgba(200,70,10,0.700) 50%,rgba(160,50,0,0) 100%),linear-gradient(90deg,#8a3008 0%,#5a2006 30%,#3a1606 50%,#8a3408 75%,#c85a0c 100%)"></div><span class="t" style="left:30px;top:11px;font-size:13px;font-weight:bold;color:#a8a098">5</span><div style="left:44px;top:17.500px;width:24px;height:3px;background:radial-gradient(closest-side,#fff,rgba(255,200,120,0))"></div><div style="left:53px;top:15px;width:7px;height:8px;border-radius:4px;background:radial-gradient(closest-side,#fff,rgba(255,220,160,0))"></div><span class="t" style="left:75px;top:11px;font-size:11px;color:#fff">5秒倒计时</span></div><div style="left:338.3px;top:87px;width:25.0px;height:41px;border-radius:3px;background:#00b6f6;border:1px solid #0aa8ff;overflow:hidden"><div style="left:0;top:0;width:100%;height:100%;background:radial-gradient(ellipse 9px 8px at 45% 22%,#8c9a58 0%,rgba(110,120,50,0.600) 60%,rgba(90,90,14,0) 100%),linear-gradient(#5e6412,#5a560c)"></div><span class="t" style="left:0.500px;top:12px;font-size:8.500px;font-weight:bold;color:#f0d81e;letter-spacing:-0.4px">MORNI</span></div><div style="left:365.5px;top:87px;width:25.0px;height:41px;border-radius:3px;background:#00b6f6;border:1px solid #0aa8ff;overflow:hidden"><div style="left:0;top:0;width:100%;height:100%;background:radial-gradient(ellipse 9px 8px at 45% 22%,#8c9a58 0%,rgba(110,120,50,0.600) 60%,rgba(90,90,14,0) 100%),linear-gradient(#5e6412,#5a560c)"></div><span class="t" style="left:0.500px;top:12px;font-size:8.500px;font-weight:bold;color:#f0d81e;letter-spacing:-0.4px">MORNI</span></div><div style="left:392.7px;top:87px;width:412.3px;height:41px;border-radius:3px;background:#00b6f6;border:1px solid #0aa8ff;overflow:hidden"><div style="left:2px;top:1px;width:66px;height:37px;background:linear-gradient(90deg,#8a98a2 0%,#a8b4ba 40%,#96a8ae 70%,#7a8c94 100%)"></div><svg style="left:2px;top:1px" width="66" height="37"><g fill="#e8ecee" stroke="#6a7880" stroke-width="0.800"><circle cx="22" cy="9" r="7"/><circle cx="14" cy="25" r="8.500"/><circle cx="31" cy="24" r="8"/></g><g fill="none" stroke="#56646c" stroke-width="0.700"><circle cx="22" cy="9" r="3.500"/><circle cx="14" cy="25" r="4.500"/><circle cx="31" cy="24" r="4"/><circle cx="14" cy="25" r="1.800"/><circle cx="31" cy="24" r="1.600"/></g><g fill="#dfe8ea" opacity="0.700"><circle cx="45" cy="6" r="0.800"/><circle cx="52" cy="14" r="0.800"/><circle cx="58" cy="8" r="0.800"/><circle cx="48" cy="22" r="0.800"/><circle cx="60" cy="28" r="0.800"/><circle cx="42" cy="30" r="0.800"/></g></svg><div style="left:67px;top:1px;width:1.500px;height:37px;background:#222"></div><span class="t" style="left:73px;top:11px;font-size:11px;color:#fff">银色玫瑰</span></div><div style="left:807.0px;top:87px;width:282.4px;height:41px;border-radius:3px;background:#00b6f6;border:1.500px solid #f5a623;overflow:hidden"><svg style="left:4.500px;top:0.500px" width="65" height="37"><use href="#xmas" width="65" height="37"/></svg><div style="left:27px;top:5px;width:16px;height:9px;background:rgba(190,205,230,0.550);border-radius:2px;filter:blur(0.600px)"></div><div style="left:40px;top:0;width:29px;height:37px;background:linear-gradient(90deg,rgba(5,15,40,0),rgba(5,15,40,0.450))"></div><div style="left:0;top:0;width:3.500px;height:38px;background:#f5a623"></div><svg style="left:0.500px;top:5px" width="3" height="28"><path d="M1.200 1 V27" stroke="#fff" stroke-width="2" stroke-dasharray="2.200 2.200"/></svg><div style="left:auto;right:0;top:0;width:3.500px;height:38px;background:#f5a623"></div><svg style="left:auto;right:0;top:5px" width="3" height="28"><path d="M1.200 1 V27" stroke="#fff" stroke-width="2" stroke-dasharray="2.200 2.200"/></svg><span class="t" style="left:73px;top:10px;font-size:11px;color:#fff">圣诞快乐1</span></div><div style="left:1091.0px;top:87px;width:37.0px;height:41px;border-radius:3px;background:#00b6f6;border:1.5px solid #0aa4f6;overflow:hidden"><div style="left:0;top:0;width:100%;height:100%;background:linear-gradient(40deg,#f09a40 0%,#f4bc3a 35%,#f9de52 65%,#f6cc40 100%)"></div><span class="t" style="left:0;top:4.500px;width:34px;text-align:center;font-size:7.500px;line-height:7.600px;font-weight:bold;color:#561a0c;letter-spacing:-0.300px;transform:scaleY(1.270);transform-origin:50% 0">THE<br>NEXT<br>MORNING</span></div><div style="left:1130.0px;top:87px;width:37.0px;height:41px;border-radius:3px;background:#00b6f6;border:1.5px solid #0aa4f6;overflow:hidden"><div style="left:0;top:0;width:100%;height:100%;background:linear-gradient(40deg,#f09a40 0%,#f4bc3a 35%,#f9de52 65%,#f6cc40 100%)"></div><span class="t" style="left:0;top:4.500px;width:34px;text-align:center;font-size:7.500px;line-height:7.600px;font-weight:bold;color:#561a0c;letter-spacing:-0.300px;transform:scaleY(1.270);transform-origin:50% 0">THE<br>NEXT<br>MORNING</span></div><div style="left:1168.7px;top:87px;width:24.3px;height:41px;border-radius:3px;background:#00b6f6;border:1.5px solid #0aa4f6;overflow:hidden"><div style="left:0;top:0;width:100%;height:100%;background:linear-gradient(90deg,#e8820e,#8a3206 60%,#5a1c04)"></div></div>
<div style="left:194.3px;top:184.5px;width:135.0px;height:23px;border-radius:3px;background:#27b27a;overflow:hidden"><div style="left:3px;top:3px;width:19px;height:17px;border-radius:2px;background:#fff"></div><svg style="left:3px;top:3px" width="19" height="17" viewBox="0 0 19 17" fill="none" stroke="#ee5a3a" stroke-width="1.500"><path d="M5.500 5 V3.500 H13.500 V5 M9.500 3.500 V13 M7 13.300 H12"/></svg><span class="t" style="left:26px;top:3.500px;font-size:11.300px;word-spacing:2.500px;color:#fff">双击文字条编辑 - 左右</span></div><div style="left:336.8px;top:184.5px;width:135.0px;height:23px;border-radius:3px;background:#27b27a;overflow:hidden"><div style="left:3px;top:3px;width:19px;height:17px;border-radius:2px;background:#fff"></div><svg style="left:3px;top:3px" width="19" height="17" viewBox="0 0 19 17" fill="none" stroke="#ee5a3a" stroke-width="1.500"><path d="M5.500 5 V3.500 H13.500 V5 M9.500 3.500 V13 M7 13.300 H12"/></svg><span class="t" style="left:26px;top:3.500px;font-size:11.300px;word-spacing:2.500px;color:#fff">双击文字条编辑 - 左右</span></div>
<div style="left:206.8px;top:181px;width:1px;height:29px;background:#e8c820"></div><div style="left:202.6px;top:175px;width:9.500px;height:9.500px;border-radius:5px;background:#f0d020"></div><div style="left:315.0px;top:181px;width:1px;height:29px;background:#e8c820"></div><div style="left:310.8px;top:175px;width:9.500px;height:9.500px;border-radius:5px;background:#f0d020"></div><div style="left:348.8px;top:181px;width:1px;height:29px;background:#e8c820"></div><div style="left:344.6px;top:175px;width:9.500px;height:9.500px;border-radius:5px;background:#f0d020"></div><div style="left:457.5px;top:181px;width:1px;height:29px;background:#e8c820"></div><div style="left:453.2px;top:175px;width:9.500px;height:9.500px;border-radius:5px;background:#f0d020"></div>
<div style="left:805.7px;top:48px;width:1px;height:284px;background:#d84a4a"></div><svg style="left:800.7px;top:40.5px" width="11" height="14" viewBox="0 0 11 14"><path d="M0 1 Q0 0 1 0 H10 Q11 0 11 1 V8.500 L5.500 14 L0 8.500 Z" fill="#ee4b4b"/></svg><div style="left:797px;top:188px;width:19px;height:33px;border-radius:9px;background:#ee4b4b"></div><svg style="left:797px;top:188px" width="19" height="33" viewBox="0 0 19 33" fill="none" stroke="#fff" stroke-width="1" stroke-linecap="round"><path d="M6.500 11 L11.500 19.500 M12.500 11 L7.500 19.500"/><circle cx="6.800" cy="21" r="1.900"/><circle cx="12.200" cy="21" r="1.900"/></svg>
<div style="left:194px;top:322px;width:518px;height:10px;border-radius:5px;background:#0ea2ec"></div><div style="left:1179px;top:78px;width:9.500px;height:196px;border-radius:5px;background:#0ea2ec"></div>
<div class="hd" style="height:41px"></div><svg style="left:0;top:0" width="1189" height="41" viewBox="7 407 1189 41" fill="none" stroke="#1a9fe8" stroke-width="1.300" stroke-linecap="round" stroke-linejoin="round">
<path d="M24.500 420.500 L21 424 L24.500 427.500 M21 424 H30 Q35.500 424 35.500 429.300 Q35.500 434.500 30 434.500 H25.500"/>
<path d="M61.500 420.500 L65 424 L61.500 427.500 M65 424 H56 Q50.500 424 50.500 429.300 Q50.500 434.500 56 434.500 H60.500" stroke="#1b4668"/>
<path d="M79 423.300 H94.500 M82.500 420 H91 M80.500 426 V434.500 H93 V426 M84.800 427.500 V432 M88.700 427.500 V432"/>
<path d="M109.500 420 V432.500 L113 429.500 L115.500 434.500 L117.500 433.500 L115.200 428.800 L119.500 428.300 Z"/>
<path d="M128 426 L132.200 429.800 L136.400 426" stroke-width="1.600"/>
<path d="M153.700 421.500 L160.200 428 L153.700 434.500 L147.200 428 Z M153.700 425 V431 M150.700 428 H156.700"/>
<path d="M176 421 V434" stroke="#3d4560"/>
<path d="M193.500 419.500 L200 430.500 M203.500 419.500 L197 430.500"/><circle cx="193.800" cy="431.800" r="2.500"/><circle cx="203.200" cy="431.800" r="2.500"/>
<path d="M249.200 431.500 A7.200 7.200 0 1 1 262 431.500"/><path d="M255 431 L258.500 425.300" stroke-width="1.800"/>
<path d="M308.500 419.500 V431.500 H320.500 M306.300 422 H318.300 V434.200"/><path d="M311.800 424.500 L315.600 426.800 L311.800 429.100 Z" fill="#1a9fe8" stroke-width="0.800"/>
<g stroke="#1b4668"><rect x="398" y="420" width="13.500" height="13.500" rx="1.500"/><path d="M405.500 424 L408 426.500 L405.800 427.200 L404 430 L403.300 427.800 L401.500 430.500"/></g>
<rect x="455.500" y="419.700" width="14" height="14" rx="0.500"/><rect x="462.500" y="421.200" width="5.500" height="5.500" fill="#1a9fe8" stroke="none"/><rect x="457" y="426.700" width="5.500" height="5.500" fill="#1a9fe8" stroke="none"/>
<path d="M526 419.700 H536.500 M527.500 419.700 V429 H535 V419.700 M531.300 423 H535 M531.300 426 H535 M531.300 429 V433.700 M524.500 433.700 H538.500"/>
<path d="M582 421.700 V419.700 H595.500 V421.700 M582 433.700 H595.500 M584.300 425.700 V429.200 M586.600 423.700 V431.200 M588.900 422.200 V432.700 M591.200 423.700 V431.200 M593.500 425.700 V429.200"/>
<path d="M677 430 H673.500 V420 H686 V423 M676 422.500 V426.500 M678.500 422.500 V426.500 M681 422.500 V424.500"/><rect x="679" y="426" width="9.500" height="8" /><path d="M682 432.500 L683.800 428 L685.600 432.500 M682.700 431 H684.900" stroke-width="0.900"/>
<rect x="751" y="419.300" width="13" height="10.500"/><circle cx="757.500" cy="423.100" r="1.300" fill="#1a9fe8" stroke="none"/><path d="M755 427.300 Q757.500 424.800 760 427.300 Z" fill="#1a9fe8" stroke="none"/><path d="M757.500 429.800 V433.700 M754 433.700 H761"/>
<path d="M870.500 435.300 H864.500 A7.200 7.200 0 1 1 870 433"/><circle cx="864.500" cy="425" r="0.900" fill="#1a9fe8" stroke="none"/><circle cx="861.500" cy="428.200" r="0.900" fill="#1a9fe8" stroke="none"/><circle cx="867.500" cy="428.200" r="0.900" fill="#1a9fe8" stroke="none"/><circle cx="864.500" cy="431.300" r="0.900" fill="#1a9fe8" stroke="none"/>
<rect x="884" y="421.500" width="9" height="14"/><rect x="895.500" y="421.500" width="9" height="14"/><path d="M885.500 428.500 H892 M889.500 426 L892 428.500 L889.500 431 M903 428.500 H896.500 M899 426 L896.500 428.500 L899 431"/>
<rect x="918" y="422" width="8" height="13"/><rect x="928.500" y="422" width="8" height="13"/><path d="M923 425 H924 M923 427.200 H924 M923 429.400 H924 M923 431.600 H924 M930.500 425 H931.500 M930.500 427.200 H931.500 M930.500 429.400 H931.500 M930.500 431.600 H931.500" stroke-width="1"/>
<rect x="950" y="421.500" width="14.500" height="14.500"/><path d="M953.500 424 L959.500 431 M961 424 L955 431" stroke-width="1.100"/><circle cx="954.300" cy="432" r="1.500" stroke-width="1"/><circle cx="960.200" cy="432" r="1.500" stroke-width="1"/>
<path d="M978.500 421.500 H989.500 V432 L984 436 L978.500 432 Z"/>
<rect x="1003" y="421.500" width="20.500" height="14"/><path d="M1007.500 428.500 H1011.500 M1009.500 426.500 L1007.500 428.500 L1009.500 430.500 M1019 428.500 H1015 M1017 426.500 L1019 428.500 L1017 430.500" stroke-width="1.500"/>
<circle cx="1046" cy="428.500" r="7"/><path d="M1042.500 428.500 H1049.500"/>
<circle cx="1170.500" cy="428.500" r="7"/><path d="M1167 428.500 H1174 M1170.500 425 V432"/>
</svg><span class="t" style="left:204.0px;top:13.5px;font-size:11.5px;color:#1a9fe8;">切割</span><span class="t" style="left:261.5px;top:13.5px;font-size:11.5px;color:#1a9fe8;">调速</span><span class="t" style="left:319.5px;top:13.5px;font-size:11.5px;color:#1a9fe8;">裁剪和缩放</span><span class="t" style="left:411.0px;top:13.5px;font-size:11.5px;color:#1b4668;">定格</span><span class="t" style="left:468.5px;top:13.5px;font-size:11.5px;color:#1a9fe8;">去水印</span><span class="t" style="left:538.0px;top:13.5px;font-size:11.5px;color:#1a9fe8;">录音</span><span class="t" style="left:595.0px;top:13.5px;font-size:11.5px;color:#1a9fe8;">文字转语音</span><div style="left:687px;top:12px;width:41.500px;height:20px;overflow:hidden"><span class="t" style="left:0;top:1.500px;font-size:11.500px;color:#1a9fe8">语音转文字</span></div>
<div style="left:771px;top:10px;width:68px;height:22px;border-radius:11px;background:#169fe9"></div>
<span class="t" style="left:771px;top:13px;width:68px;text-align:center;font-size:11.500px;color:#fff;font-weight:bold">导出</span>
<div style="left:1054px;top:20.500px;width:94px;height:2px;background:#3f4760"></div>
<div style="left:1054px;top:20.500px;width:53px;height:2px;background:#1a9fe8"></div>
<div style="left:1101.5px;top:16px;width:11px;height:11px;border-radius:6px;border:2px solid #1a9fe8;background:#1b1f2a"></div>

</div>
</div>
</body>
</html>
